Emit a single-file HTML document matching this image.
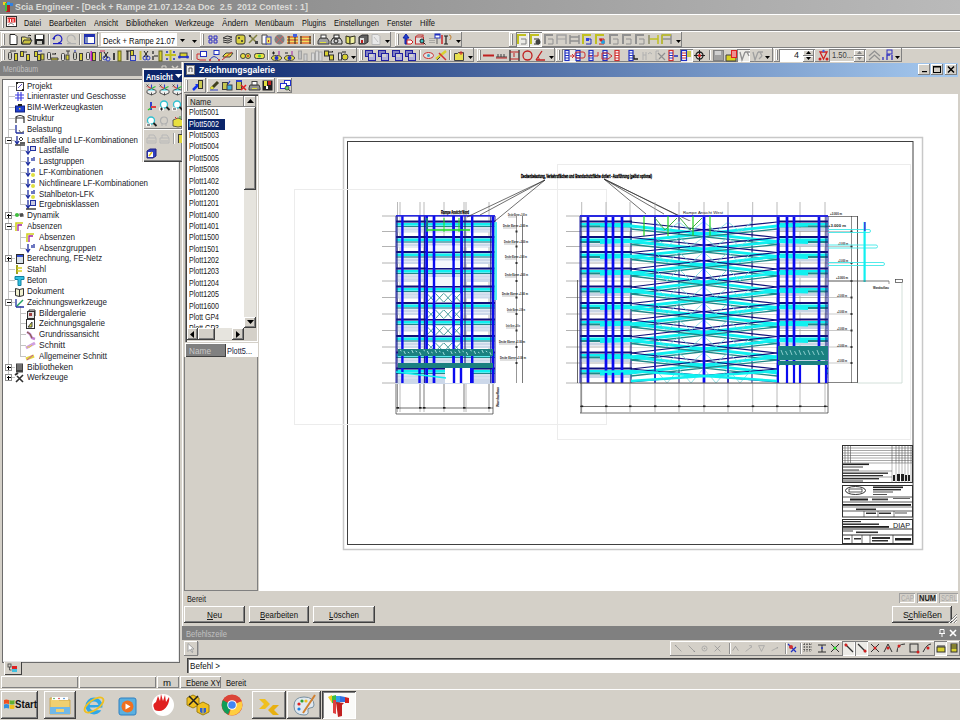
<!DOCTYPE html><html><head><meta charset="utf-8"><style>
html,body{margin:0;padding:0;width:960px;height:720px;overflow:hidden;background:#d4d0c8;position:relative}
div{position:absolute}
.t{font-family:"Liberation Sans",sans-serif;white-space:nowrap;transform-origin:0 0}
svg{position:absolute;overflow:visible}
</style></head><body>
<div style="left:0px;top:0px;width:960px;height:14px;background:linear-gradient(90deg,#7f7f7f,#bababa)"></div>
<svg style="left:2px;top:1px" width="12" height="12" viewBox="0 0 12 12"><path d="M1 3 L5 1 L11 3 L8 5 L6 11 L4 11 L4 5 Z" fill="#e03020"/><rect x="1" y="1" width="3" height="3" fill="#f0d020"/><rect x="3" y="2" width="2" height="8" fill="#40c040"/><rect x="5" y="1" width="3" height="3" fill="#30a0f0"/><rect x="8" y="2" width="3" height="3" fill="#3080e0"/><rect x="5" y="4" width="3" height="7" fill="#b02020"/></svg>
<div class="t" style="left:15px;top:3px;font-size:9px;line-height:9px;color:#dcdcd8;font-weight:bold;transform:scaleX(0.987);">Scia Engineer - [Deck + Rampe 21.07.12-2a Doc  2.5  2012 Contest : 1]</div>
<div style="left:0px;top:14px;width:960px;height:1px;background:#fff"></div>
<svg style="left:6px;top:16px" width="12" height="12" viewBox="0 0 12 12"><rect x="0.5" y="0.5" width="10" height="10" fill="#fff" stroke="#303030"/><rect x="1.5" y="1.5" width="8" height="5" fill="#e02828"/><path d="M2 3v3M4.5 3v3M7 3v3" stroke="#fff"/><path d="M2 9 l3 -2 l3 2" stroke="#909090" fill="none"/></svg>
<div class="t" style="left:24px;top:19px;font-size:9px;line-height:9px;color:#101010;transform:scaleX(0.809);">Datei</div>
<div class="t" style="left:49px;top:19px;font-size:9px;line-height:9px;color:#101010;transform:scaleX(0.850);">Bearbeiten</div>
<div class="t" style="left:94px;top:19px;font-size:9px;line-height:9px;color:#101010;transform:scaleX(0.813);">Ansicht</div>
<div class="t" style="left:126px;top:19px;font-size:9px;line-height:9px;color:#101010;transform:scaleX(0.857);">Bibliotheken</div>
<div class="t" style="left:175px;top:19px;font-size:9px;line-height:9px;color:#101010;transform:scaleX(0.860);">Werkzeuge</div>
<div class="t" style="left:222px;top:19px;font-size:9px;line-height:9px;color:#101010;transform:scaleX(0.896);">Ändern</div>
<div class="t" style="left:255px;top:19px;font-size:9px;line-height:9px;color:#101010;transform:scaleX(0.866);">Menübaum</div>
<div class="t" style="left:302px;top:19px;font-size:9px;line-height:9px;color:#101010;transform:scaleX(0.813);">Plugins</div>
<div class="t" style="left:334px;top:19px;font-size:9px;line-height:9px;color:#101010;transform:scaleX(0.833);">Einstellungen</div>
<div class="t" style="left:387px;top:19px;font-size:9px;line-height:9px;color:#101010;transform:scaleX(0.819);">Fenster</div>
<div class="t" style="left:420px;top:19px;font-size:9px;line-height:9px;color:#101010;transform:scaleX(0.833);">Hilfe</div>
<div style="left:0px;top:30px;width:960px;height:1px;background:#808080"></div>
<div style="left:0px;top:31px;width:960px;height:1px;background:#fff"></div>
<div style="left:0px;top:47px;width:960px;height:1px;background:#808080"></div>
<div style="left:0px;top:48px;width:960px;height:1px;background:#fff"></div>
<div style="left:2px;top:16px;width:1px;height:12px;background:#fff"></div>
<div style="left:3px;top:16px;width:1px;height:12px;background:#808080"></div>
<div style="left:1px;top:32px;width:97px;height:15px;background:#d4d0c8;box-shadow:inset -1px -1px #808080,inset 1px 1px #fff"></div>
<div style="left:3px;top:34px;width:1px;height:11px;background:#fff"></div>
<div style="left:4px;top:34px;width:1px;height:11px;background:#808080"></div>
<svg style="left:8px;top:34px" width="11" height="11" viewBox="0 0 11 11"><path d="M2 0.5h5l2 2v8h-7z" fill="#fff" stroke="#222"/></svg>
<svg style="left:21px;top:34px" width="11" height="11" viewBox="0 0 11 11"><path d="M0.5 3h4l1 1h4v6h-9z" fill="#e8e070" stroke="#333"/><path d="M1 10l2 -4h8l-2 4z" fill="#c8c040" stroke="#333"/><path d="M7 2l2-1 1 1" stroke="#222" fill="none"/></svg>
<svg style="left:34px;top:34px" width="11" height="11" viewBox="0 0 11 11"><rect x="0.5" y="0.5" width="10" height="10" fill="#222"/><rect x="2" y="1" width="7" height="4" fill="#fff"/><rect x="3" y="7" width="5" height="3" fill="#c8c8c0"/></svg>
<div style="left:48px;top:34px;width:1px;height:11px;background:#808080"></div>
<div style="left:49px;top:34px;width:1px;height:11px;background:#fff"></div>
<svg style="left:52px;top:34px" width="11" height="11" viewBox="0 0 11 11"><path d="M2 6a4 4 0 1 1 4 3" stroke="#2020c0" stroke-width="1.2" fill="none"/><path d="M0 5l3 0 0 -3z" fill="#2020c0"/><rect x="1" y="9" width="9" height="1.2" fill="#2020c0"/></svg>
<svg style="left:66px;top:34px" width="11" height="11" viewBox="0 0 11 11"><path d="M9 6a4 4 0 1 0 -4 3" stroke="#b0b0b0" stroke-width="1.2" fill="none"/><rect x="1" y="9" width="9" height="1.2" fill="#b0b0b0"/></svg>
<div style="left:79px;top:34px;width:1px;height:11px;background:#808080"></div>
<div style="left:80px;top:34px;width:1px;height:11px;background:#fff"></div>
<svg style="left:84px;top:34px" width="11" height="11" viewBox="0 0 11 11"><rect x="0.5" y="0.5" width="10" height="9" fill="#fff" stroke="#2030b0"/><rect x="1" y="1" width="9" height="2" fill="#2030b0"/><rect x="1" y="3" width="3" height="6" fill="#8090c0"/></svg>
<div style="left:97px;top:34px;width:1px;height:11px;background:#808080"></div>
<div style="left:98px;top:34px;width:1px;height:11px;background:#fff"></div>
<div style="left:101px;top:33px;width:76px;height:13px;background:#fff"></div>
<div class="t" style="left:103px;top:37px;font-size:9px;line-height:9px;color:#101010;transform:scaleX(0.849);">Deck + Rampe 21.07</div>
<div style="left:177px;top:33px;width:11px;height:13px;background:#d4d0c8"></div>
<svg style="left:180px;top:39px" width="5" height="3" viewBox="0 0 5 3"><path d="M0 0h5l-2.5 3z" fill="#000"/></svg>
<svg style="left:192px;top:40px" width="5" height="3" viewBox="0 0 5 3"><path d="M0 0h5l-2.5 3z" fill="#000"/></svg>
<div style="left:200px;top:32px;width:191px;height:15px;background:#d4d0c8;box-shadow:inset -1px -1px #808080,inset 1px 1px #fff"></div>
<div style="left:202px;top:34px;width:1px;height:11px;background:#fff"></div>
<div style="left:203px;top:34px;width:1px;height:11px;background:#808080"></div>
<svg style="left:208px;top:34px" width="11" height="11" viewBox="0 0 11 11"><path d="M1 2h3v3h-3zM6 2h3v3h-3zM1 6h3v3h-3zM6 6h3v3h-3z" fill="none" stroke="#3030c0"/></svg>
<svg style="left:222px;top:34px" width="11" height="11" viewBox="0 0 11 11"><path d="M1 4l4-2 5 1-4 2zM1 6l5 1 4-2M1 8l5 1 4-2" stroke="#333" fill="none"/></svg>
<svg style="left:235px;top:34px" width="11" height="11" viewBox="0 0 11 11"><rect x="1" y="1" width="9" height="9" rx="2" fill="#d8d040" stroke="#333"/><circle cx="4" cy="4" r="1" fill="#333"/><circle cx="7" cy="7" r="1" fill="#333"/></svg>
<svg style="left:248px;top:34px" width="11" height="11" viewBox="0 0 11 11"><path d="M1 1l8 8M9 1l-8 8" stroke="#808040" stroke-width="1.5"/><rect x="1" y="1" width="2" height="2" fill="#444"/><rect x="7" y="7" width="3" height="3" fill="#444"/></svg>
<svg style="left:261px;top:34px" width="11" height="11" viewBox="0 0 11 11"><path d="M1 1h5v9h-5z" fill="#fff" stroke="#444"/><rect x="5" y="3" width="5" height="7" fill="#f0e060" stroke="#3040c0"/><rect x="7" y="6" width="1" height="2" fill="#c03030"/></svg>
<svg style="left:274px;top:34px" width="11" height="11" viewBox="0 0 11 11"><circle cx="5.5" cy="5.5" r="5" fill="#808080"/><path d="M2 2l7 7M9 2l-7 7" stroke="#d06060"/></svg>
<svg style="left:287px;top:34px" width="11" height="11" viewBox="0 0 11 11"><rect x="0" y="2" width="11" height="8" fill="#f0e060"/><path d="M0 3h11M0 6h11M0 9h11" stroke="#d03030"/><path d="M2 2v8M8 2v8" stroke="#222"/><rect x="6" y="0" width="4" height="3" fill="#4060e0"/></svg>
<svg style="left:300px;top:34px" width="11" height="11" viewBox="0 0 11 11"><rect x="0" y="2" width="11" height="8" fill="#f0e060"/><path d="M0 3h11M0 6h11M0 9h11" stroke="#d03030"/><path d="M1 2v8M10 2v8" stroke="#222"/></svg>
<div style="left:313px;top:34px;width:1px;height:11px;background:#808080"></div>
<div style="left:314px;top:34px;width:1px;height:11px;background:#fff"></div>
<svg style="left:318px;top:34px" width="11" height="11" viewBox="0 0 11 11"><path d="M2 4h7l2 3v3h-11v-3z" fill="#a0a0a0" stroke="#404040"/><rect x="3" y="1" width="5" height="3" fill="#fff" stroke="#404040"/><rect x="2" y="8" width="6" height="1" fill="#e0e040"/></svg>
<svg style="left:331px;top:34px" width="11" height="11" viewBox="0 0 11 11"><path d="M2 4h7l2 3v3h-11v-3z" fill="#d0d0d0" stroke="#202020"/><rect x="3" y="1" width="5" height="3" fill="#fff" stroke="#202020"/><circle cx="5" cy="7" r="2" fill="none" stroke="#202020"/></svg>
<svg style="left:345px;top:34px" width="11" height="11" viewBox="0 0 11 11"><path d="M1 2l4 1v7l-4-1z" fill="#e0e060" stroke="#303020"/><path d="M5 3l5-1v7l-5 1z" fill="#f0f0a0" stroke="#303020"/></svg>
<svg style="left:358px;top:34px" width="11" height="11" viewBox="0 0 11 11"><path d="M1 3l3-2h6v7l-3 2h-6z" fill="#606060" stroke="#303030"/><rect x="2" y="4" width="4" height="5" fill="#e0e0e0"/><rect x="3" y="6" width="2" height="3" fill="#c02020"/></svg>
<svg style="left:371px;top:34px" width="11" height="11" viewBox="0 0 11 11"><path d="M1 0.5h6l2 2v8h-8z" fill="#e8e8e8" stroke="#b8b8b8"/><path d="M3 3l4 5" stroke="#c0c0c0"/></svg>
<svg style="left:385px;top:40px" width="5" height="3" viewBox="0 0 5 3"><path d="M0 0h5l-2.5 3z" fill="#000"/></svg>
<div style="left:395px;top:32px;width:67px;height:15px;background:#d4d0c8;box-shadow:inset -1px -1px #808080,inset 1px 1px #fff"></div>
<div style="left:397px;top:34px;width:1px;height:11px;background:#fff"></div>
<div style="left:398px;top:34px;width:1px;height:11px;background:#808080"></div>
<svg style="left:402px;top:34px" width="11" height="11" viewBox="0 0 11 11"><path d="M3 10v-6h-2l3-4 3 4h-2v6z" fill="#2040d0" stroke="#1020a0"/><path d="M5 6h4l2 2-2 2h-4z" fill="#fff" stroke="#d02020"/></svg>
<svg style="left:415px;top:34px" width="11" height="11" viewBox="0 0 11 11"><rect x="0.5" y="3" width="8" height="7" fill="#e0e0e0" stroke="#c03030"/><path d="M0.5 3l2-2h6l-2 2" fill="none" stroke="#c03030"/><circle cx="7" cy="7" r="2" fill="#40c0c0" stroke="#202020"/><path d="M8.5 8.5l2 2" stroke="#202020"/></svg>
<svg style="left:429px;top:34px" width="11" height="11" viewBox="0 0 11 11"><path d="M1 4v6M3 4v6M5 4v6" stroke="#808080" stroke-dasharray="1 1"/><rect x="6" y="0" width="5" height="4" fill="#fff" stroke="#2030c0"/><rect x="6" y="0" width="5" height="1.5" fill="#2030c0"/><path d="M8 4v6" stroke="#606060"/></svg>
<svg style="left:441px;top:34px" width="11" height="11" viewBox="0 0 11 11"><rect x="0" y="1" width="2" height="9" fill="#d05050"/><path d="M3 2h4M5 2v8M3 10h4" stroke="#202020" stroke-width="1.2"/><path d="M8 1q2 0 2 2t-1 2v1" stroke="#c08030" fill="none"/></svg>
<svg style="left:456px;top:40px" width="5" height="3" viewBox="0 0 5 3"><path d="M0 0h5l-2.5 3z" fill="#000"/></svg>
<div style="left:509px;top:32px;width:173px;height:15px;background:#d4d0c8;box-shadow:inset -1px -1px #808080,inset 1px 1px #fff"></div>
<div style="left:511px;top:34px;width:1px;height:11px;background:#fff"></div>
<div style="left:512px;top:34px;width:1px;height:11px;background:#808080"></div>
<div style="left:516px;top:32px;width:13px;height:15px;background:#ecebe6;box-shadow:inset 1px 1px #808080,inset -1px -1px #fff"></div>
<div style="left:529px;top:32px;width:13px;height:15px;background:#ecebe6;box-shadow:inset 1px 1px #808080,inset -1px -1px #fff"></div>
<svg style="left:517px;top:34px" width="11" height="11" viewBox="0 0 11 11"><path d="M1 10v-9h8" stroke="#c0c020" stroke-width="2" fill="none"/><path d="M4 5h5v5h-5" stroke="#808080" stroke-width="1" fill="none"/></svg>
<svg style="left:530px;top:34px" width="11" height="11" viewBox="0 0 11 11"><path d="M1 10v-9h8" stroke="#c0c020" stroke-width="2" fill="none"/><path d="M4 5h5v5h-5" stroke="#303030" stroke-width="1" fill="none"/><circle cx="8" cy="8" r="2.5" fill="#404040"/></svg>
<svg style="left:544px;top:34px" width="11" height="11" viewBox="0 0 11 11"><path d="M1 10v-9h8" stroke="#909090" stroke-width="2" fill="none"/><path d="M4 5h5v5h-5" stroke="#909090" stroke-width="1" fill="none"/></svg>
<svg style="left:556px;top:34px" width="11" height="11" viewBox="0 0 11 11"><path d="M1 10v-9h9v9" stroke="#a0a0a0" stroke-width="1.5" fill="none"/><path d="M1 5h9" stroke="#a0a0a0"/></svg>
<svg style="left:569px;top:34px" width="11" height="11" viewBox="0 0 11 11"><path d="M1 10v-9M10 10v-9M1 3h9M1 7h9" stroke="#909090" stroke-width="1.5" fill="none"/></svg>
<svg style="left:582px;top:34px" width="11" height="11" viewBox="0 0 11 11"><path d="M1 10v-9h8" stroke="#c0c020" stroke-width="2" fill="none"/><path d="M4 5h5v5h-5" stroke="#2030c0" stroke-width="1" fill="none"/><rect x="4" y="4" width="3" height="3" fill="#3040e0"/></svg>
<svg style="left:595px;top:34px" width="11" height="11" viewBox="0 0 11 11"><path d="M1 10v-9h8" stroke="#c0c020" stroke-width="2" fill="none"/><path d="M4 5h5v5h-5" stroke="#c02020" stroke-width="1" fill="none"/><circle cx="8" cy="8" r="2" fill="#20a0e0"/><circle cx="6" cy="6" r="1.5" fill="#d02020"/></svg>
<svg style="left:609px;top:34px" width="11" height="11" viewBox="0 0 11 11"><path d="M1 10v-9h8" stroke="#909090" stroke-width="2" fill="none"/><path d="M4 5h5v5h-5" stroke="#909090" stroke-width="1" fill="none"/></svg>
<svg style="left:622px;top:34px" width="11" height="11" viewBox="0 0 11 11"><path d="M1 10v-9h8" stroke="#909090" stroke-width="2" fill="none"/><path d="M4 5h5v5h-5" stroke="#909090" stroke-width="1" fill="none"/></svg>
<svg style="left:635px;top:34px" width="11" height="11" viewBox="0 0 11 11"><path d="M1 10v-9h8" stroke="#909090" stroke-width="2" fill="none"/><path d="M4 5h5v5h-5" stroke="#909090" stroke-width="1" fill="none"/></svg>
<svg style="left:648px;top:34px" width="11" height="11" viewBox="0 0 11 11"><path d="M1 10v-9M10 10v-9M1 5h9" stroke="#c0c020" stroke-width="1.5" fill="none"/><path d="M1 1v9" stroke="#909090" stroke-width="1.5"/></svg>
<svg style="left:661px;top:34px" width="11" height="11" viewBox="0 0 11 11"><path d="M1 10v-9h9v9M1 5h9" stroke="#909090" stroke-width="1.5" fill="none"/><path d="M1 1v9M1 1h9" stroke="#c0c020" stroke-width="1.5"/></svg>
<svg style="left:676px;top:40px" width="5" height="3" viewBox="0 0 5 3"><path d="M0 0h5l-2.5 3z" fill="#000"/></svg>
<div style="left:1px;top:48px;width:356px;height:14px;background:#d4d0c8;box-shadow:inset -1px -1px #808080,inset 1px 1px #fff"></div>
<div style="left:3px;top:50px;width:1px;height:10px;background:#fff"></div>
<div style="left:4px;top:50px;width:1px;height:10px;background:#808080"></div>
<svg style="left:7.5px;top:50px" width="11" height="11" viewBox="0 0 11 11"><rect x="0.5" y="2.5" width="3" height="7" rx="1" fill="#c8c8c0" stroke="#404040"/><rect x="6.5" y="3.5" width="3" height="7" fill="#d8d030" stroke="#404040"/><path d="M2 1h6" stroke="#404040"/></svg>
<svg style="left:20px;top:50px" width="11" height="11" viewBox="0 0 11 11"><rect x="0.5" y="1.5" width="3" height="5" fill="#d8d030" stroke="#404040"/><rect x="6.5" y="4.5" width="3" height="6" fill="#d8d030" stroke="#404040"/><path d="M3 2h4" stroke="#404040"/></svg>
<svg style="left:34px;top:50px" width="11" height="11" viewBox="0 0 11 11"><rect x="0.5" y="1.5" width="3" height="5" fill="#d8d030" stroke="#404040"/><rect x="3.5" y="4.5" width="3" height="6" fill="#d8d030" stroke="#404040"/><rect x="7" y="4" width="3" height="6" fill="#d8d030" stroke="#404040"/><path d="M4 1h4" stroke="#2030c0"/></svg>
<svg style="left:47px;top:50px" width="11" height="11" viewBox="0 0 11 11"><rect x="0.5" y="2.5" width="3" height="7" rx="1" fill="#e0e0e0" stroke="#404040"/><path d="M4 8h7v2h-7z" fill="#d8d030" stroke="#404040"/><path d="M5 4h4l-1-1" stroke="#202020" fill="none"/></svg>
<svg style="left:60.5px;top:50px" width="11" height="11" viewBox="0 0 11 11"><rect x="0.5" y="3.5" width="3" height="7" rx="1" fill="#e0e0e0" stroke="#404040"/><rect x="5" y="5" width="3" height="5" fill="#d8d030" stroke="#404040"/><path d="M5 1h4M7 1v3" stroke="#404040"/></svg>
<svg style="left:73px;top:50px" width="11" height="11" viewBox="0 0 11 11"><rect x="0.5" y="2.5" width="3" height="7" rx="1" fill="#c8c8c0" stroke="#404040"/><rect x="6.5" y="3.5" width="3" height="7" fill="#d8d030" stroke="#404040"/><path d="M1 1h2" stroke="#2030c0"/></svg>
<svg style="left:86px;top:50px" width="11" height="11" viewBox="0 0 11 11"><rect x="0.5" y="2.5" width="3" height="7" rx="1" fill="#e0e0e0" stroke="#404040"/><rect x="6.5" y="2.5" width="3" height="8" fill="#d8d030" stroke="#404040"/><rect x="4.5" y="1" width="1.5" height="10" fill="#c020c0"/></svg>
<svg style="left:99px;top:50px" width="11" height="11" viewBox="0 0 11 11"><rect x="0.5" y="2.5" width="2" height="8" fill="#d8d030" stroke="#606060"/><path d="M1 1h5" stroke="#d03060"/><circle cx="6" cy="8" r="2" fill="none" stroke="#3040c0"/><circle cx="9" cy="9" r="2" fill="none" stroke="#3040c0"/><path d="M5 2l4 6M9 2l-4 6" stroke="#202020"/></svg>
<svg style="left:112px;top:50px" width="11" height="11" viewBox="0 0 11 11"><rect x="1" y="3" width="2" height="7" fill="#404040"/><rect x="6" y="1" width="3" height="10" fill="#d8d030" stroke="#606020"/></svg>
<svg style="left:126px;top:50px" width="11" height="11" viewBox="0 0 11 11"><rect x="0.5" y="1" width="2" height="9" fill="#404040"/><path d="M0 1h4" stroke="#202020"/><rect x="4.5" y="5.5" width="5" height="5" fill="none" stroke="#3040c0"/><rect x="4.5" y="0.5" width="3" height="5" fill="#d8d030" stroke="#404040"/></svg>
<svg style="left:139px;top:50px" width="11" height="11" viewBox="0 0 11 11"><rect x="0.5" y="1" width="2" height="9" fill="#c8c030"/><circle cx="6" cy="8" r="2" fill="none" stroke="#3040c0"/><circle cx="9" cy="8" r="2" fill="none" stroke="#3040c0"/><path d="M5 1l4 6M9 1l-4 6" stroke="#202020"/></svg>
<svg style="left:152px;top:50px" width="11" height="11" viewBox="0 0 11 11"><path d="M1 1v3M1 6v4" stroke="#404040" stroke-width="1.5"/><path d="M2 6h4" stroke="#202020"/><rect x="7" y="1" width="3" height="10" fill="#d8d030" stroke="#606020"/></svg>
<svg style="left:165px;top:50px" width="11" height="11" viewBox="0 0 11 11"><path d="M0 5h11M5.5 0v11" stroke="#c0c020" stroke-width="2"/><circle cx="2" cy="2" r="1" fill="#2030c0"/><circle cx="9" cy="2" r="1" fill="#2030c0"/><circle cx="2" cy="9" r="1" fill="#2030c0"/><circle cx="9" cy="9" r="1" fill="#2030c0"/></svg>
<svg style="left:178px;top:50px" width="11" height="11" viewBox="0 0 11 11"><rect x="2" y="3" width="7" height="4" fill="#d8d030" stroke="#404040"/><circle cx="1.5" cy="7" r="1.5" fill="#2030d0"/><circle cx="9.5" cy="7" r="1.5" fill="#2030d0"/><path d="M1 7h9" stroke="#2030d0" stroke-width="1.5"/></svg>
<div style="left:191px;top:50px;width:1px;height:10px;background:#808080"></div>
<div style="left:192px;top:50px;width:1px;height:10px;background:#fff"></div>
<svg style="left:196px;top:50px" width="11" height="11" viewBox="0 0 11 11"><rect x="4.5" y="1.5" width="6" height="5" fill="#fff" stroke="#2030c0"/><path d="M1 4h3M1 4v5l3 1h6" stroke="#d03030" fill="none"/></svg>
<svg style="left:209px;top:50px" width="11" height="11" viewBox="0 0 11 11"><rect x="5" y="0.5" width="5" height="4" fill="#fff" stroke="#2030c0"/><path d="M0.5 10.5q4-8 10 0" stroke="#3040c0" fill="none"/><circle cx="1" cy="10" r="1" fill="#d03030"/><circle cx="10" cy="10" r="1" fill="#d03030"/></svg>
<svg style="left:222px;top:50px" width="11" height="11" viewBox="0 0 11 11"><path d="M1 6l3-3h7l-3 4h-7z" fill="#e8e040" stroke="#404040"/><path d="M0 10l10-8" stroke="#d03030"/></svg>
<div style="left:236px;top:50px;width:1px;height:10px;background:#808080"></div>
<div style="left:237px;top:50px;width:1px;height:10px;background:#fff"></div>
<svg style="left:240px;top:50px" width="11" height="11" viewBox="0 0 11 11"><circle cx="3" cy="6" r="2.5" fill="#e8e040" stroke="#404040"/><circle cx="8" cy="6" r="2.5" fill="#e8e040" stroke="#404040"/><circle cx="8" cy="6" r="1" fill="#d03030"/></svg>
<svg style="left:254px;top:50px" width="11" height="11" viewBox="0 0 11 11"><rect x="0.5" y="3.5" width="10" height="5" rx="2" fill="#e8e040" stroke="#404040"/><circle cx="5.5" cy="6" r="1.5" fill="#40d040"/></svg>
<div style="left:267px;top:50px;width:1px;height:10px;background:#808080"></div>
<div style="left:268px;top:50px;width:1px;height:10px;background:#fff"></div>
<svg style="left:271px;top:50px" width="11" height="11" viewBox="0 0 11 11"><ellipse cx="5.5" cy="8" rx="5" ry="2.5" fill="#e8e040" stroke="#404040"/><circle cx="5.5" cy="8" r="2" fill="#2030d0"/><path d="M1 3h3M2.5 1.5v3" stroke="#202020"/><path d="M8 1v4" stroke="#a020a0"/></svg>
<svg style="left:284px;top:50px" width="11" height="11" viewBox="0 0 11 11"><ellipse cx="5.5" cy="8" rx="5" ry="2.5" fill="#e8e040" stroke="#404040"/><circle cx="5.5" cy="8" r="2" fill="#2030d0"/><path d="M1 3h3" stroke="#202020"/><path d="M8 1v4" stroke="#a020a0"/></svg>
<svg style="left:297.5px;top:50px" width="11" height="11" viewBox="0 0 11 11"><rect x="0.5" y="1" width="3" height="8" fill="#c0c0c0" stroke="#a0a0a0"/><rect x="6" y="4" width="3" height="7" fill="#d0d0d0" stroke="#a0a0a0"/></svg>
<svg style="left:311px;top:50px" width="11" height="11" viewBox="0 0 11 11"><rect x="0.5" y="3" width="3" height="8" fill="#d8d8d8" stroke="#a8a8a8"/><rect x="4.5" y="1" width="3" height="10" fill="#d8d8d8" stroke="#a8a8a8"/><rect x="8" y="2" width="3" height="9" fill="#d8d8d8" stroke="#a8a8a8"/></svg>
<svg style="left:324px;top:50px" width="11" height="11" viewBox="0 0 11 11"><rect x="0.5" y="1" width="4" height="5" fill="#d8d030" stroke="#303030"/><rect x="5.5" y="5" width="4" height="5" fill="#d8d030" stroke="#303030"/><path d="M5 2h4l-1-1" stroke="#202020" fill="none"/></svg>
<svg style="left:337.5px;top:50px" width="11" height="11" viewBox="0 0 11 11"><rect x="0.5" y="3" width="3" height="7" fill="#e0e0e0" stroke="#404040"/><circle cx="7" cy="7" r="3" fill="#d8d030" stroke="#404040"/><path d="M4 2h4" stroke="#202020"/></svg>
<svg style="left:351px;top:56px" width="5" height="3" viewBox="0 0 5 3"><path d="M0 0h5l-2.5 3z" fill="#000"/></svg>
<div style="left:359px;top:48px;width:115px;height:14px;background:#d4d0c8;box-shadow:inset -1px -1px #808080,inset 1px 1px #fff"></div>
<div style="left:361px;top:50px;width:1px;height:10px;background:#fff"></div>
<div style="left:362px;top:50px;width:1px;height:10px;background:#808080"></div>
<svg style="left:365px;top:50px" width="11" height="11" viewBox="0 0 11 11"><rect x="0.5" y="0.5" width="7" height="6" fill="#8080c0" stroke="#2020a0"/><rect x="3.5" y="3.5" width="7" height="7" fill="#b0b0d8" stroke="#2020a0"/><rect x="4" y="4" width="4" height="3" fill="#d0d0d0"/></svg>
<svg style="left:378px;top:50px" width="11" height="11" viewBox="0 0 11 11"><rect x="0.5" y="0.5" width="7" height="6" fill="#8080c0" stroke="#2020a0"/><rect x="3.5" y="3.5" width="7" height="7" fill="#b0b0d8" stroke="#2020a0"/><rect x="4" y="4" width="4" height="3" fill="#d0d0d0"/></svg>
<svg style="left:392px;top:50px" width="11" height="11" viewBox="0 0 11 11"><rect x="0.5" y="0.5" width="7" height="6" fill="#8080c0" stroke="#2020a0"/><rect x="3.5" y="3.5" width="7" height="7" fill="#b0b0d8" stroke="#2020a0"/><rect x="4" y="4" width="4" height="3" fill="#d0d0d0"/></svg>
<svg style="left:405px;top:50px" width="11" height="11" viewBox="0 0 11 11"><rect x="0.5" y="0.5" width="7" height="6" fill="#8080c0" stroke="#2020a0"/><rect x="3.5" y="3.5" width="7" height="7" fill="#b0b0d8" stroke="#2020a0"/><rect x="4" y="4" width="4" height="3" fill="#d0d0d0"/></svg>
<div style="left:419px;top:50px;width:1px;height:10px;background:#808080"></div>
<div style="left:420px;top:50px;width:1px;height:10px;background:#fff"></div>
<svg style="left:423px;top:50px" width="11" height="11" viewBox="0 0 11 11"><ellipse cx="5.5" cy="5.5" rx="5" ry="3" fill="#e0e0e0" stroke="#d03030"/><circle cx="5.5" cy="5.5" r="1.5" fill="#40a0c0"/></svg>
<svg style="left:436px;top:50px" width="11" height="11" viewBox="0 0 11 11"><path d="M0 9l10-8" stroke="#d8d030" stroke-width="2.5"/><path d="M3 3l7 7" stroke="#d03030" stroke-width="1.5"/><path d="M1 10l3-3" stroke="#404040"/></svg>
<div style="left:449px;top:50px;width:1px;height:10px;background:#808080"></div>
<div style="left:450px;top:50px;width:1px;height:10px;background:#fff"></div>
<svg style="left:454px;top:50px" width="11" height="11" viewBox="0 0 11 11"><path d="M0.5 3.5h3l1-1h5v8h-9z" fill="#e8e050" stroke="#404040"/><path d="M7 1v4M5 3h4" stroke="#d03030"/></svg>
<svg style="left:468px;top:56px" width="5" height="3" viewBox="0 0 5 3"><path d="M0 0h5l-2.5 3z" fill="#000"/></svg>
<div style="left:477px;top:48px;width:78px;height:14px;background:#d4d0c8;box-shadow:inset -1px -1px #808080,inset 1px 1px #fff"></div>
<div style="left:479px;top:50px;width:1px;height:10px;background:#fff"></div>
<div style="left:480px;top:50px;width:1px;height:10px;background:#808080"></div>
<svg style="left:482.5px;top:50px" width="11" height="11" viewBox="0 0 11 11"><rect x="0" y="4.5" width="11" height="2" fill="#c02020"/></svg>
<svg style="left:495.5px;top:50px" width="11" height="11" viewBox="0 0 11 11"><path d="M0 7h11M2 4v3M5 4v3M8 4v3" stroke="#404040"/><path d="M0 8h11" stroke="#c02020"/></svg>
<svg style="left:509px;top:50px" width="11" height="11" viewBox="0 0 11 11"><path d="M1 0v11M10 0v11" stroke="#404040" stroke-width="1.5"/><path d="M1 2h9M1 9h9" stroke="#c02020" stroke-width="1.2"/><path d="M5 3v4" stroke="#c02020"/></svg>
<svg style="left:522px;top:50px" width="11" height="11" viewBox="0 0 11 11"><circle cx="5.5" cy="5.5" r="4.5" fill="none" stroke="#c02020" stroke-width="1.3"/></svg>
<svg style="left:535px;top:50px" width="11" height="11" viewBox="0 0 11 11"><path d="M1 10h9M1 10l6-9" stroke="#c02020" stroke-width="1.3"/><path d="M4 10a3 3 0 0 0 -1-3" stroke="#c02020" fill="none"/></svg>
<svg style="left:548.5px;top:56px" width="5" height="3" viewBox="0 0 5 3"><path d="M0 0h5l-2.5 3z" fill="#000"/></svg>
<div style="left:556px;top:48px;width:217px;height:14px;background:#d4d0c8;box-shadow:inset -1px -1px #808080,inset 1px 1px #fff"></div>
<div style="left:558px;top:50px;width:1px;height:10px;background:#fff"></div>
<div style="left:559px;top:50px;width:1px;height:10px;background:#808080"></div>
<div style="left:562px;top:49px;width:14px;height:13px;background:#ecebe6;box-shadow:inset 1px 1px #808080,inset -1px -1px #fff"></div>
<svg style="left:564px;top:50px" width="11" height="11" viewBox="0 0 11 11"><rect x="1" y="0.5" width="4" height="10" fill="#fff" stroke="#2030c0" stroke-width="1.2"/><path d="M1 3h4M1 5.5h4M1 8h4" stroke="#2030c0"/><path d="M6 6h4l-2-2M10 6l-2 2" stroke="#d03030" fill="none"/></svg>
<svg style="left:575px;top:50px" width="11" height="11" viewBox="0 0 11 11"><rect x="1" y="0.5" width="4" height="10" fill="#fff" stroke="#2030c0" stroke-width="1.2"/><path d="M1 3h4M1 5.5h4M1 8h4" stroke="#2030c0"/><rect x="0" y="2" width="10" height="6" rx="2" fill="none" stroke="#d03030"/></svg>
<svg style="left:588px;top:50px" width="11" height="11" viewBox="0 0 11 11"><rect x="1" y="0.5" width="4" height="10" fill="#fff" stroke="#2030c0" stroke-width="1.2"/><path d="M1 3h4M1 5.5h4M1 8h4" stroke="#2030c0"/><path d="M0 6h4M6 6h4v-4" stroke="#d03030" fill="none"/></svg>
<svg style="left:602px;top:50px" width="11" height="11" viewBox="0 0 11 11"><rect x="1" y="0.5" width="4" height="10" fill="#fff" stroke="#2030c0" stroke-width="1.2"/><path d="M1 3h4M1 5.5h4M1 8h4" stroke="#2030c0"/><path d="M0 3h6l4 3-4 3h-6z" fill="none" stroke="#d03030"/></svg>
<svg style="left:614px;top:50px" width="11" height="11" viewBox="0 0 11 11"><rect x="1" y="0.5" width="4" height="10" fill="#fff" stroke="#d03030" stroke-width="1.2"/><path d="M1 3h4M1 5.5h4M1 8h4" stroke="#d03030"/></svg>
<svg style="left:628px;top:50px" width="11" height="11" viewBox="0 0 11 11"><rect x="1" y="0.5" width="4" height="10" fill="#fff" stroke="#2030c0" stroke-width="1.2"/><path d="M1 3h4M1 5.5h4M1 8h4" stroke="#2030c0"/><path d="M6 5v4h4" stroke="#202020" stroke-width="1.3" fill="none"/></svg>
<svg style="left:642px;top:50px" width="11" height="11" viewBox="0 0 11 11"><path d="M1 10v-8M4 10v-8M1 5h3" stroke="#b0b0b0"/><path d="M6 4q2-3 4 0" stroke="#b0b0b0" fill="none"/></svg>
<svg style="left:655px;top:50px" width="11" height="11" viewBox="0 0 11 11"><path d="M1 10v-9M1 1h3M1 10h3" stroke="#b0b0b0"/><path d="M3 3l7 7M4 9l6-6" stroke="#909090" stroke-width="1.2"/></svg>
<svg style="left:668px;top:50px" width="11" height="11" viewBox="0 0 11 11"><rect x="1" y="0.5" width="4" height="10" fill="#fff" stroke="#d03030" stroke-width="1.2"/><path d="M1 3h4M1 5.5h4M1 8h4" stroke="#2030c0"/><path d="M6 6h4" stroke="#2030c0" stroke-width="1.5"/></svg>
<div style="left:680px;top:49px;width:13px;height:13px;background:#ecebe6;box-shadow:inset 1px 1px #808080,inset -1px -1px #fff"></div>
<svg style="left:681px;top:50px" width="11" height="11" viewBox="0 0 11 11"><rect x="0.5" y="0.5" width="5" height="10" fill="#fff" stroke="#2030c0" stroke-width="1.2"/><path d="M1 3h4M1 5.5h4M1 8h4" stroke="#d03030"/><rect x="6" y="1" width="4" height="6" fill="#c8c850"/></svg>
<svg style="left:694px;top:50px" width="11" height="11" viewBox="0 0 11 11"><circle cx="5.5" cy="5.5" r="3.5" fill="none" stroke="#202020" stroke-width="1.3"/><path d="M5.5 0v11M0 5.5h11" stroke="#202020"/><circle cx="5.5" cy="5.5" r="1.5" fill="#e02020"/></svg>
<div style="left:709px;top:50px;width:1px;height:10px;background:#808080"></div>
<div style="left:710px;top:50px;width:1px;height:10px;background:#fff"></div>
<svg style="left:713px;top:50px" width="11" height="11" viewBox="0 0 11 11"><rect x="0.5" y="0.5" width="10" height="10" fill="#a0a0a0" stroke="#808080"/><rect x="2" y="1" width="6" height="4" fill="#d0d0d0"/></svg>
<svg style="left:726px;top:50px" width="11" height="11" viewBox="0 0 11 11"><path d="M0 5h5l5 -3v9h-10z" fill="#d8d020" stroke="#404040"/><rect x="5" y="0" width="6" height="8" fill="#e02020"/><path d="M6 2h4M6 4h4M6 6h4" stroke="#fff"/></svg>
<div style="left:737px;top:49px;width:13px;height:13px;background:#ecebe6;box-shadow:inset 1px 1px #808080,inset -1px -1px #fff"></div>
<svg style="left:739px;top:50px" width="11" height="11" viewBox="0 0 11 11"><path d="M1 2l2 8 3-8M6 2h5M8 2l2 4" stroke="#909090" stroke-width="1.3" fill="none"/></svg>
<svg style="left:752px;top:50px" width="11" height="11" viewBox="0 0 11 11"><path d="M1 2l2 8 3-8M6 2h5M8 2l2 4M7 9l3-3" stroke="#a0a0a0" stroke-width="1.3" fill="none"/></svg>
<svg style="left:765px;top:56px" width="5" height="3" viewBox="0 0 5 3"><path d="M0 0h5l-2.5 3z" fill="#000"/></svg>
<div style="left:774px;top:48px;width:128px;height:14px;background:#d4d0c8;box-shadow:inset -1px -1px #808080,inset 1px 1px #fff"></div>
<div style="left:776px;top:50px;width:1px;height:10px;background:#fff"></div>
<div style="left:777px;top:50px;width:1px;height:10px;background:#808080"></div>
<div style="left:779px;top:49px;width:36px;height:13px;background:#fff;box-shadow:inset 1px 1px #808080,inset -1px -1px #fff"></div>
<div class="t" style="left:794px;top:51px;font-size:9px;line-height:9px;color:#202020;transform:scaleX(0.999);">4</div>
<div style="left:803px;top:50px;width:11px;height:6px;background:#d4d0c8;box-shadow:inset -1px -1px #808080,inset 1px 1px #fff"></div>
<div style="left:803px;top:56px;width:11px;height:6px;background:#d4d0c8;box-shadow:inset -1px -1px #808080,inset 1px 1px #fff"></div>
<svg style="left:806px;top:51px" width="5" height="3" viewBox="0 0 5 3"><path d="M0 3h5l-2.5-3z" fill="#000"/></svg>
<svg style="left:806px;top:57px" width="5" height="3" viewBox="0 0 5 3"><path d="M0 0h5l-2.5 3z" fill="#000"/></svg>
<svg style="left:818px;top:50px" width="11" height="11" viewBox="0 0 11 11"><path d="M2 2h7l-3.5 7z" fill="none" stroke="#d02020" stroke-width="1.3"/><circle cx="2" cy="9" r="1.5" fill="#d02020"/><circle cx="9" cy="9" r="1.5" fill="#d02020"/><circle cx="5.5" cy="1" r="1.2" fill="#4060e0"/></svg>
<div style="left:829px;top:49px;width:37px;height:13px;background:#d4d0c8;box-shadow:inset 1px 1px #808080,inset -1px -1px #fff"></div>
<div class="t" style="left:832px;top:51px;font-size:9px;line-height:9px;color:#404040;transform:scaleX(0.839);">1.50...</div>
<div style="left:854px;top:50px;width:11px;height:6px;background:#d4d0c8;box-shadow:inset -1px -1px #808080,inset 1px 1px #fff"></div>
<div style="left:854px;top:56px;width:11px;height:6px;background:#d4d0c8;box-shadow:inset -1px -1px #808080,inset 1px 1px #fff"></div>
<svg style="left:857px;top:51px" width="5" height="3" viewBox="0 0 5 3"><path d="M0 3h5l-2.5-3z" fill="#808080"/></svg>
<svg style="left:857px;top:57px" width="5" height="3" viewBox="0 0 5 3"><path d="M0 0h5l-2.5 3z" fill="#808080"/></svg>
<svg style="left:869px;top:50px" width="11" height="11" viewBox="0 0 11 11"><path d="M0 6l5.5-5 5.5 5M0 10l5.5-5 5.5 5" stroke="#909090" fill="none" stroke-width="1.2"/></svg>
<svg style="left:882px;top:50px" width="11" height="11" viewBox="0 0 11 11"><rect x="5" y="0" width="5" height="4" fill="none" stroke="#3030c0"/><path d="M1 10v-3M5 10v-5h3M10 10v-5" stroke="#3030c0" stroke-width="1.3" fill="none"/></svg>
<svg style="left:895px;top:56px" width="5" height="3" viewBox="0 0 5 3"><path d="M0 0h5l-2.5 3z" fill="#000"/></svg>
<div style="left:0px;top:62px;width:181px;height:14px;background:#808080"></div>
<div class="t" style="left:3px;top:65px;font-size:9px;line-height:9px;color:#c0c0c0;transform:scaleX(0.777);">Menübaum</div>
<svg style="left:160px;top:65px" width="8" height="8" viewBox="0 0 8 8"><path d="M2 1h4v4h-4zM1 5h6M4 5v3" stroke="#d4d0c8" fill="none"/></svg>
<svg style="left:171px;top:65px" width="8" height="8" viewBox="0 0 8 8"><path d="M1 1l6 6M7 1l-6 6" stroke="#d4d0c8" stroke-width="1.5"/></svg>
<div style="left:2px;top:79px;width:178px;height:584px;background:#fff;border:1px solid #6c6c6c;box-sizing:border-box;box-shadow:inset -1px -1px #e8e8e8"></div>
<div style="left:8px;top:86px;width:1px;height:291px;background:#c4c4c4"></div>
<div style="left:20px;top:144px;width:1px;height:61px;background:#c4c4c4"></div>
<div style="left:20px;top:230px;width:1px;height:18px;background:#c4c4c4"></div>
<div style="left:20px;top:306px;width:1px;height:50px;background:#c4c4c4"></div>
<div style="left:9px;top:86px;width:6px;height:1px;background:#c4c4c4"></div>
<svg style="left:15px;top:81.5px" width="10" height="10" viewBox="0 0 10 10"><rect x="1.5" y="0.5" width="7" height="8" fill="#fff" stroke="#404040"/><path d="M3 6l4-4" stroke="#6050c0"/><rect x="1" y="0" width="2" height="2" fill="#202020"/><rect x="7" y="7" width="2" height="2" fill="#202020"/></svg>
<div class="t" style="left:27px;top:82px;font-size:9px;line-height:9px;color:#1a1a28;transform:scaleX(0.892);">Projekt</div>
<div style="left:9px;top:96px;width:6px;height:1px;background:#c4c4c4"></div>
<svg style="left:15px;top:91.5px" width="10" height="10" viewBox="0 0 10 10"><path d="M3 0v9M6 0v9M0 3h9M0 6h9" stroke="#4040e0" stroke-width="1.2"/></svg>
<div class="t" style="left:27px;top:92px;font-size:9px;line-height:9px;color:#1a1a28;transform:scaleX(0.883);">Linienraster und Geschosse</div>
<div style="left:9px;top:107px;width:6px;height:1px;background:#c4c4c4"></div>
<svg style="left:15px;top:102.5px" width="10" height="10" viewBox="0 0 10 10"><rect x="0.5" y="3" width="9" height="6" fill="#2040d0" stroke="#102080"/><rect x="3" y="1" width="4" height="2" fill="#202020"/><rect x="4" y="5" width="1.5" height="1.5" fill="#f0e040"/></svg>
<div class="t" style="left:27px;top:103px;font-size:9px;line-height:9px;color:#1a1a28;transform:scaleX(0.885);">BIM-Werkzeugkasten</div>
<div style="left:9px;top:118px;width:6px;height:1px;background:#c4c4c4"></div>
<svg style="left:15px;top:113.5px" width="10" height="10" viewBox="0 0 10 10"><path d="M1 9v-6q4-3 8 0v6" stroke="#303030" fill="none" stroke-width="1.2"/><path d="M1 4h8" stroke="#303030"/></svg>
<div class="t" style="left:27px;top:114px;font-size:9px;line-height:9px;color:#1a1a28;transform:scaleX(0.857);">Struktur</div>
<div style="left:9px;top:129px;width:6px;height:1px;background:#c4c4c4"></div>
<svg style="left:15px;top:124.5px" width="10" height="10" viewBox="0 0 10 10"><path d="M1 0v8M1 8h8" stroke="#2030a0" stroke-width="1.3"/><path d="M4 5l2 3 3-2" stroke="#606060" fill="none"/></svg>
<div class="t" style="left:27px;top:125px;font-size:9px;line-height:9px;color:#1a1a28;transform:scaleX(0.874);">Belastung</div>
<div style="left:9px;top:140px;width:6px;height:1px;background:#c4c4c4"></div>
<div style="left:5px;top:137px;width:7px;height:7px;background:#fff;border:1px solid #909090;box-sizing:border-box"></div>
<div style="left:6.5px;top:140px;width:4px;height:1px;background:#000"></div>
<svg style="left:15px;top:135.5px" width="10" height="10" viewBox="0 0 10 10"><path d="M2 0v7M0 5l2 3 2-3" stroke="#2030a0" stroke-width="1.3" fill="none"/><path d="M0 9h10" stroke="#404040" stroke-width="1.5"/><path d="M6 1l2 2-2 2-2-2z" fill="#fff" stroke="#404040"/><path d="M5 6h5v2h-5z" fill="#606060"/></svg>
<div class="t" style="left:27px;top:136px;font-size:9px;line-height:9px;color:#1a1a28;transform:scaleX(0.873);">Lastfälle und LF-Kombinationen</div>
<div style="left:20px;top:150px;width:6px;height:1px;background:#c4c4c4"></div>
<svg style="left:26px;top:145.5px" width="10" height="10" viewBox="0 0 10 10"><path d="M2 0v7M0 5l2 3 2-3" stroke="#2030a0" stroke-width="1.3" fill="none"/><rect x="4.5" y="0.5" width="5" height="4" fill="#d8d8e8" stroke="#2030a0"/></svg>
<div class="t" style="left:38.5px;top:146px;font-size:9px;line-height:9px;color:#1a1a28;transform:scaleX(0.895);">Lastfälle</div>
<div style="left:20px;top:161px;width:6px;height:1px;background:#c4c4c4"></div>
<svg style="left:26px;top:156.5px" width="10" height="10" viewBox="0 0 10 10"><path d="M2 0v7M0 5l2 3 2-3" stroke="#2030a0" stroke-width="1.3" fill="none"/><path d="M6 1v3M8 0v4" stroke="#2030a0" stroke-width="1.3"/></svg>
<div class="t" style="left:38.5px;top:157px;font-size:9px;line-height:9px;color:#1a1a28;transform:scaleX(0.899);">Lastgruppen</div>
<div style="left:20px;top:172px;width:6px;height:1px;background:#c4c4c4"></div>
<svg style="left:26px;top:167.5px" width="10" height="10" viewBox="0 0 10 10"><path d="M2 0v7M0 5l2 3 2-3" stroke="#2030a0" stroke-width="1.3" fill="none"/><path d="M6 1v3M8 0v4" stroke="#2030a0" stroke-width="1.3"/><circle cx="7" cy="7" r="2" fill="#e0e040"/></svg>
<div class="t" style="left:38.5px;top:168px;font-size:9px;line-height:9px;color:#1a1a28;transform:scaleX(0.870);">LF-Kombinationen</div>
<div style="left:20px;top:183px;width:6px;height:1px;background:#c4c4c4"></div>
<svg style="left:26px;top:178.5px" width="10" height="10" viewBox="0 0 10 10"><path d="M2 0v7M0 5l2 3 2-3" stroke="#2030a0" stroke-width="1.3" fill="none"/><path d="M6 1v3M8 0v4" stroke="#2030a0" stroke-width="1.3"/><circle cx="7" cy="7" r="2" fill="#e0e040"/></svg>
<div class="t" style="left:38.5px;top:179px;font-size:9px;line-height:9px;color:#1a1a28;transform:scaleX(0.882);">Nichtlineare LF-Kombinationen</div>
<div style="left:20px;top:194px;width:6px;height:1px;background:#c4c4c4"></div>
<svg style="left:26px;top:189.5px" width="10" height="10" viewBox="0 0 10 10"><path d="M2 0v7M0 5l2 3 2-3" stroke="#2030a0" stroke-width="1.3" fill="none"/><path d="M6 1v3M8 0v4" stroke="#2030a0" stroke-width="1.3"/><circle cx="7" cy="7" r="2" fill="#e0e040"/></svg>
<div class="t" style="left:38.5px;top:190px;font-size:9px;line-height:9px;color:#1a1a28;transform:scaleX(0.879);">Stahlbeton-LFK</div>
<div style="left:20px;top:204px;width:6px;height:1px;background:#c4c4c4"></div>
<svg style="left:26px;top:199.5px" width="10" height="10" viewBox="0 0 10 10"><path d="M2 0v7M0 5l2 3 2-3" stroke="#2030a0" stroke-width="1.3" fill="none"/><rect x="4.5" y="0.5" width="5" height="5" fill="#c8c8e0" stroke="#2030a0"/><path d="M0 9h10" stroke="#202020" stroke-width="1.3"/></svg>
<div class="t" style="left:38.5px;top:200px;font-size:9px;line-height:9px;color:#1a1a28;transform:scaleX(0.909);">Ergebnisklassen</div>
<div style="left:9px;top:215px;width:6px;height:1px;background:#c4c4c4"></div>
<div style="left:5px;top:212px;width:7px;height:7px;background:#fff;border:1px solid #909090;box-sizing:border-box"></div>
<div style="left:6.5px;top:215px;width:4px;height:1px;background:#000"></div>
<div style="left:8px;top:213.5px;width:1px;height:4px;background:#000"></div>
<svg style="left:15px;top:210.5px" width="10" height="10" viewBox="0 0 10 10"><path d="M0 4h9" stroke="#606060"/><circle cx="2" cy="4" r="2" fill="#40c040"/><path d="M5 2l1 4 1-4 1 4" stroke="#404040" fill="none"/></svg>
<div class="t" style="left:27px;top:211px;font-size:9px;line-height:9px;color:#1a1a28;transform:scaleX(0.914);">Dynamik</div>
<div style="left:9px;top:226px;width:6px;height:1px;background:#c4c4c4"></div>
<div style="left:5px;top:223px;width:7px;height:7px;background:#fff;border:1px solid #909090;box-sizing:border-box"></div>
<div style="left:6.5px;top:226px;width:4px;height:1px;background:#000"></div>
<svg style="left:15px;top:221.5px" width="10" height="10" viewBox="0 0 10 10"><path d="M1 9v-8h7" stroke="#d0d020" stroke-width="1.6" fill="none"/><path d="M3 9v-6h4" stroke="#a020a0" stroke-width="1.3" fill="none"/></svg>
<div class="t" style="left:27px;top:222px;font-size:9px;line-height:9px;color:#1a1a28;transform:scaleX(0.874);">Absenzen</div>
<div style="left:20px;top:237px;width:6px;height:1px;background:#c4c4c4"></div>
<svg style="left:26px;top:232.5px" width="10" height="10" viewBox="0 0 10 10"><path d="M1 9v-8h7" stroke="#d0d020" stroke-width="1.6" fill="none"/><path d="M3 9v-6h4" stroke="#a020a0" stroke-width="1.3" fill="none"/></svg>
<div class="t" style="left:38.5px;top:233px;font-size:9px;line-height:9px;color:#1a1a28;transform:scaleX(0.899);">Absenzen</div>
<div style="left:20px;top:248px;width:6px;height:1px;background:#c4c4c4"></div>
<svg style="left:26px;top:243.5px" width="10" height="10" viewBox="0 0 10 10"><path d="M2 0v7M0 5l2 3 2-3" stroke="#2030a0" stroke-width="1.3" fill="none"/><path d="M6 1v3M8 0v4" stroke="#2030a0" stroke-width="1.3"/></svg>
<div class="t" style="left:38.5px;top:244px;font-size:9px;line-height:9px;color:#1a1a28;transform:scaleX(0.904);">Absenzgruppen</div>
<div style="left:9px;top:258px;width:6px;height:1px;background:#c4c4c4"></div>
<div style="left:5px;top:255px;width:7px;height:7px;background:#fff;border:1px solid #909090;box-sizing:border-box"></div>
<div style="left:6.5px;top:258px;width:4px;height:1px;background:#000"></div>
<div style="left:8px;top:256.5px;width:1px;height:4px;background:#000"></div>
<svg style="left:15px;top:253.5px" width="10" height="10" viewBox="0 0 10 10"><rect x="1.5" y="0.5" width="7" height="9" fill="#d8e0e8" stroke="#303030"/><rect x="2" y="1" width="6" height="2" fill="#3050d0"/></svg>
<div class="t" style="left:27px;top:254px;font-size:9px;line-height:9px;color:#1a1a28;transform:scaleX(0.867);">Berechnung, FE-Netz</div>
<div style="left:9px;top:269px;width:6px;height:1px;background:#c4c4c4"></div>
<svg style="left:15px;top:264.5px" width="10" height="10" viewBox="0 0 10 10"><path d="M2 0v9" stroke="#a0a020" stroke-width="2"/><path d="M2 3h5M2 6h5" stroke="#d8d020" stroke-width="1.5"/></svg>
<div class="t" style="left:27px;top:265px;font-size:9px;line-height:9px;color:#1a1a28;transform:scaleX(0.926);">Stahl</div>
<div style="left:9px;top:280px;width:6px;height:1px;background:#c4c4c4"></div>
<svg style="left:15px;top:275.5px" width="10" height="10" viewBox="0 0 10 10"><path d="M0 0.5h9v3h-3v6h-3v-6h-3z" fill="#30c0e0" stroke="#1080a0"/></svg>
<div class="t" style="left:27px;top:276px;font-size:9px;line-height:9px;color:#1a1a28;transform:scaleX(0.850);">Beton</div>
<div style="left:9px;top:291px;width:6px;height:1px;background:#c4c4c4"></div>
<svg style="left:15px;top:286.5px" width="10" height="10" viewBox="0 0 10 10"><path d="M0.5 1.5l4 1 4-1v7l-4 1-4-1z" fill="#f0f0d0" stroke="#303030"/><path d="M4.5 2.5v7" stroke="#303030"/></svg>
<div class="t" style="left:27px;top:287px;font-size:9px;line-height:9px;color:#1a1a28;transform:scaleX(0.902);">Dokument</div>
<div style="left:9px;top:302px;width:6px;height:1px;background:#c4c4c4"></div>
<div style="left:5px;top:299px;width:7px;height:7px;background:#fff;border:1px solid #909090;box-sizing:border-box"></div>
<div style="left:6.5px;top:302px;width:4px;height:1px;background:#000"></div>
<svg style="left:15px;top:297.5px" width="10" height="10" viewBox="0 0 10 10"><path d="M1 9h8M1 9v-8" stroke="#2030a0" stroke-width="1.3"/><path d="M2 8l6-6" stroke="#20a060" stroke-width="1.5"/></svg>
<div class="t" style="left:27px;top:298px;font-size:9px;line-height:9px;color:#1a1a28;transform:scaleX(0.888);">Zeichnungswerkzeuge</div>
<div style="left:20px;top:313px;width:6px;height:1px;background:#c4c4c4"></div>
<svg style="left:26px;top:308.5px" width="10" height="10" viewBox="0 0 10 10"><rect x="1.5" y="2.5" width="7" height="7" fill="#e0e0e0" stroke="#303030"/><rect x="3" y="4" width="3" height="3" fill="#a04040"/><path d="M3 2v-1h6v6" stroke="#303030" fill="none"/></svg>
<div class="t" style="left:38.5px;top:309px;font-size:9px;line-height:9px;color:#1a1a28;transform:scaleX(0.939);">Bildergalerie</div>
<div style="left:20px;top:323px;width:6px;height:1px;background:#c4c4c4"></div>
<svg style="left:26px;top:318.5px" width="10" height="10" viewBox="0 0 10 10"><rect x="0.5" y="0.5" width="8" height="9" fill="#fff" stroke="#303030"/><path d="M2 8l4-5v5z" fill="#e0e040" stroke="#404040"/></svg>
<div class="t" style="left:38.5px;top:319px;font-size:9px;line-height:9px;color:#1a1a28;transform:scaleX(0.897);">Zeichnungsgalerie</div>
<div style="left:20px;top:334px;width:6px;height:1px;background:#c4c4c4"></div>
<svg style="left:26px;top:329.5px" width="10" height="10" viewBox="0 0 10 10"><path d="M1 2l3 2 2 4 3 1" stroke="#c080d0" stroke-width="2.5" fill="none"/><path d="M1 2l3 2 2 4" stroke="#806030" fill="none"/></svg>
<div class="t" style="left:38.5px;top:330px;font-size:9px;line-height:9px;color:#1a1a28;transform:scaleX(0.889);">Grundrissansicht</div>
<div style="left:20px;top:345px;width:6px;height:1px;background:#c4c4c4"></div>
<svg style="left:26px;top:340.5px" width="10" height="10" viewBox="0 0 10 10"><path d="M0 7l9-5" stroke="#d0a0e0" stroke-width="3"/><path d="M1 6l3 0 2-2" stroke="#e0d040" fill="none"/></svg>
<div class="t" style="left:38.5px;top:341px;font-size:9px;line-height:9px;color:#1a1a28;transform:scaleX(0.945);">Schnitt</div>
<div style="left:20px;top:356px;width:6px;height:1px;background:#c4c4c4"></div>
<svg style="left:26px;top:351.5px" width="10" height="10" viewBox="0 0 10 10"><path d="M0 7l8-3" stroke="#e0d040" stroke-width="3"/><path d="M1 8l6-5" stroke="#c050a0" stroke-width="1"/></svg>
<div class="t" style="left:38.5px;top:352px;font-size:9px;line-height:9px;color:#1a1a28;transform:scaleX(0.877);">Allgemeiner Schnitt</div>
<div style="left:9px;top:367px;width:6px;height:1px;background:#c4c4c4"></div>
<div style="left:5px;top:364px;width:7px;height:7px;background:#fff;border:1px solid #909090;box-sizing:border-box"></div>
<div style="left:6.5px;top:367px;width:4px;height:1px;background:#000"></div>
<div style="left:8px;top:365.5px;width:1px;height:4px;background:#000"></div>
<svg style="left:15px;top:362.5px" width="10" height="10" viewBox="0 0 10 10"><rect x="1" y="0.5" width="7" height="9" fill="#404040"/><path d="M2 2h5M2 4h5M2 6h5" stroke="#a0a0a0"/></svg>
<div class="t" style="left:27px;top:363px;font-size:9px;line-height:9px;color:#1a1a28;transform:scaleX(0.938);">Bibliotheken</div>
<div style="left:9px;top:377px;width:6px;height:1px;background:#c4c4c4"></div>
<div style="left:5px;top:374px;width:7px;height:7px;background:#fff;border:1px solid #909090;box-sizing:border-box"></div>
<div style="left:6.5px;top:377px;width:4px;height:1px;background:#000"></div>
<div style="left:8px;top:375.5px;width:1px;height:4px;background:#000"></div>
<svg style="left:15px;top:372.5px" width="10" height="10" viewBox="0 0 10 10"><path d="M1 9l7-7M8 9l-6-6" stroke="#303030" stroke-width="1.6"/><path d="M0 2l3-2" stroke="#303030" stroke-width="2"/></svg>
<div class="t" style="left:27px;top:373px;font-size:9px;line-height:9px;color:#1a1a28;transform:scaleX(0.904);">Werkzeuge</div>
<div style="left:4px;top:662px;width:18px;height:13px;background:#d4d0c8;box-shadow:inset 1px 0 #fff,inset -1px -1px #404040"></div>
<svg style="left:8px;top:664px" width="10" height="9" viewBox="0 0 10 9"><rect x="0" y="0" width="3" height="3" fill="none" stroke="#404040" stroke-width="0.8"/><rect x="4" y="2" width="5" height="3" fill="#e02020"/><rect x="4" y="5" width="5" height="3" fill="#40c0e0"/><path d="M1.5 3v3h2" stroke="#404040" fill="none" stroke-width="0.8"/></svg>
<div style="left:142px;top:68px;width:41px;height:94px;background:#d4d0c8;box-shadow:inset 1px 1px #d4d0c8,inset 2px 2px #fff,inset -1px -1px #404040,inset -2px -2px #808080"></div>
<div style="left:144px;top:70px;width:39px;height:12px;background:#0a246a"></div>
<div class="t" style="left:146px;top:73px;font-size:9px;line-height:9px;color:#ffffff;font-weight:bold;transform:scaleX(0.818);">Ansicht</div>
<svg style="left:175px;top:74px" width="7" height="4" viewBox="0 0 7 4"><path d="M0 0h7l-3.5 4z" fill="#fff"/></svg>
<svg style="left:146px;top:84px" width="11" height="11" viewBox="0 0 11 11"><path d="M1 6.5l4.5-2 4.5 2-4.5 2z" fill="#40d8e8" stroke="#303030" stroke-width="0.8"/><path d="M1 6.5v2.5l4.5 2 4.5-2v-2.5M5.5 8.5v2.5" fill="#f0f0f0" stroke="#303030" stroke-width="0.8"/><path d="M5.5 4.5v-4" stroke="#3040d0" stroke-width="1.1"/><path d="M5.5 4.5l-4-2" stroke="#e04848" stroke-width="1.1"/><path d="M5.5 4.5l4-2" stroke="#30c040" stroke-width="1.1"/><path d="M0.5 0.5l2 2M2.5 0.5l-2 2" stroke="#303030" stroke-width="0.7"/></svg>
<svg style="left:159px;top:84px" width="11" height="11" viewBox="0 0 11 11"><path d="M1 6.5l4.5-2 4.5 2-4.5 2z" fill="#40d8e8" stroke="#303030" stroke-width="0.8"/><path d="M1 6.5v2.5l4.5 2 4.5-2v-2.5M5.5 8.5v2.5" fill="#f0f0f0" stroke="#303030" stroke-width="0.8"/><path d="M5.5 4.5v-4" stroke="#3040d0" stroke-width="1.1"/><path d="M5.5 4.5l-4-2" stroke="#e04848" stroke-width="1.1"/><path d="M5.5 4.5l4-2" stroke="#30c040" stroke-width="1.1"/><path d="M0.5 0.5l2 2M2.5 0.5l-2 2" stroke="#303030" stroke-width="0.7"/></svg>
<svg style="left:172px;top:84px" width="11" height="11" viewBox="0 0 11 11"><path d="M1 6.5l4.5-2 4.5 2-4.5 2z" fill="#40d8e8" stroke="#303030" stroke-width="0.8"/><path d="M1 6.5v2.5l4.5 2 4.5-2v-2.5M5.5 8.5v2.5" fill="#f0f0f0" stroke="#303030" stroke-width="0.8"/><path d="M5.5 4.5v-4" stroke="#3040d0" stroke-width="1.1"/><path d="M5.5 4.5l-4-2" stroke="#e04848" stroke-width="1.1"/><path d="M5.5 4.5l4-2" stroke="#30c040" stroke-width="1.1"/><path d="M0.5 0.5l2 2M2.5 0.5l-2 2" stroke="#303030" stroke-width="0.7"/></svg>
<svg style="left:146px;top:100px" width="11" height="11" viewBox="0 0 11 11"><path d="M5 10v-8" stroke="#3040d0" stroke-width="2"/><path d="M5 7h5" stroke="#e04040" stroke-width="2"/><path d="M5 8l-3 2" stroke="#30c030" stroke-width="1.5"/></svg>
<svg style="left:159px;top:100px" width="11" height="11" viewBox="0 0 11 11"><circle cx="5" cy="4.5" r="3.5" fill="#fff" stroke="#30c0d0" stroke-width="1.3"/><path d="M7.5 7l3 3" stroke="#202020" stroke-width="1.8"/><rect x="0" y="7.5" width="5" height="3" fill="#fff"/><path d="M1 9h3M2.5 7.5v3" stroke="#202020"/></svg>
<svg style="left:172px;top:100px" width="11" height="11" viewBox="0 0 11 11"><circle cx="5" cy="4.5" r="3.5" fill="#fff" stroke="#30c0d0" stroke-width="1.3"/><path d="M7.5 7l3 3" stroke="#202020" stroke-width="1.8"/><rect x="0" y="7.5" width="5" height="3" fill="#fff"/><path d="M1 9h3" stroke="#202020"/></svg>
<svg style="left:146px;top:116px" width="11" height="11" viewBox="0 0 11 11"><circle cx="5" cy="4.5" r="3.5" fill="#fff" stroke="#30c0d0" stroke-width="1.3"/><path d="M7.5 7l3 3" stroke="#202020" stroke-width="1.8"/><rect x="0" y="7.5" width="5" height="3" fill="#fff"/><path d="M1 9h3" stroke="#202020"/></svg>
<svg style="left:159px;top:116px" width="11" height="11" viewBox="0 0 11 11"><circle cx="5" cy="4.5" r="3.5" fill="none" stroke="#b0b0b0" stroke-width="1.2"/><path d="M3 7v3M7 7v3" stroke="#b0b0b0"/></svg>
<svg style="left:172px;top:116px" width="11" height="11" viewBox="0 0 11 11"><path d="M1 4l5-2 5 2v6l-5 1-5-1z" fill="#e8e040" stroke="#404040" stroke-width="0.8"/><path d="M3 1l2 2" stroke="#d03030"/><path d="M8 0v3" stroke="#30a030"/></svg>
<div style="left:144px;top:128px;width:38px;height:1px;background:#808080"></div>
<div style="left:144px;top:129px;width:38px;height:1px;background:#fff"></div>
<svg style="left:146px;top:133px" width="11" height="11" viewBox="0 0 11 11"><path d="M1 5h9v5h-9z" fill="none" stroke="#b8b8b8"/><path d="M3 5v-3h5l2 3" fill="none" stroke="#b8b8b8"/><path d="M2 8h7" stroke="#b8b8b8"/></svg>
<svg style="left:159px;top:133px" width="11" height="11" viewBox="0 0 11 11"><path d="M1 5h9v5h-9z" fill="none" stroke="#b8b8b8"/><path d="M3 5v-3h5l2 3" fill="none" stroke="#b8b8b8"/><path d="M2 8h7" stroke="#b8b8b8"/></svg>
<div style="left:173px;top:133px;width:1px;height:11px;background:#a0a0a0"></div>
<div style="left:174px;top:133px;width:1px;height:11px;background:#fff"></div>
<div style="left:178px;top:134px;width:5px;height:9px;background:#e0d840;box-shadow:inset 1px 1px #404040"></div>
<svg style="left:146px;top:148px" width="11" height="11" viewBox="0 0 11 11"><path d="M1 3l3-2h6v7l-3 2h-6z" fill="#3040c0" stroke="#202080"/><rect x="2" y="4" width="5" height="5" fill="#fff"/><path d="M3 8l3-4" stroke="#e0c020" stroke-width="1.5"/></svg>
<div style="left:182px;top:62px;width:778px;height:565px;background:#d4d0c8;box-shadow:inset 1px 0 #fff"></div>
<div style="left:184px;top:63px;width:774px;height:14px;background:linear-gradient(90deg,#0a246a,#a6caf0)"></div>
<svg style="left:186px;top:65px" width="9" height="10" viewBox="0 0 9 10"><rect x="0.5" y="0.5" width="8" height="9" fill="#f0f0f0" stroke="#707070"/><path d="M3 7v-4h3v4" stroke="#505050" fill="none"/></svg>
<div class="t" style="left:199px;top:66px;font-size:9px;line-height:9px;color:#ffffff;font-weight:bold;transform:scaleX(0.956);">Zeichnungsgalerie</div>
<div style="left:918px;top:64px;width:12px;height:11px;background:#d4d0c8;box-shadow:inset -1px -1px #808080,inset 1px 1px #fff"></div>
<div style="left:931px;top:64px;width:12px;height:11px;background:#d4d0c8;box-shadow:inset -1px -1px #808080,inset 1px 1px #fff"></div>
<div style="left:945px;top:64px;width:12px;height:11px;background:#d4d0c8;box-shadow:inset -1px -1px #808080,inset 1px 1px #fff"></div>
<svg style="left:922px;top:71px" width="5" height="2" viewBox="0 0 5 2"><rect width="5" height="1.2" fill="#000"/></svg>
<svg style="left:933px;top:66px" width="8" height="7" viewBox="0 0 8 7"><rect x="0.5" y="0.5" width="7" height="6" fill="none" stroke="#000"/><rect x="0" y="0" width="8" height="1.5" fill="#000"/></svg>
<svg style="left:947px;top:66px" width="8" height="7" viewBox="0 0 8 7"><path d="M1 0.5l6 6M7 0.5l-6 6" stroke="#000" stroke-width="1.5"/></svg>
<div style="left:184px;top:78px;width:22px;height:15px;background:#d4d0c8;box-shadow:inset -1px -1px #808080,inset 1px 1px #fff"></div>
<div style="left:186px;top:80px;width:1px;height:11px;background:#fff"></div>
<div style="left:187px;top:80px;width:1px;height:11px;background:#808080"></div>
<svg style="left:192px;top:80px" width="11" height="11" viewBox="0 0 11 11"><path d="M1 10l5-5" stroke="#1030f0" stroke-width="2.5"/><path d="M3 4h4v4" fill="#1030f0"/><rect x="6.5" y="0.5" width="4" height="8" fill="#c8c850" stroke="#303030"/></svg>
<div style="left:207px;top:78px;width:68px;height:15px;background:#d4d0c8;box-shadow:inset -1px -1px #808080,inset 1px 1px #fff"></div>
<svg style="left:209px;top:80px" width="11" height="11" viewBox="0 0 11 11"><path d="M2 9l7-7" stroke="#404020" stroke-width="3"/><path d="M2 9l2-2" stroke="#e0e040" stroke-width="3"/><path d="M1 10h8" stroke="#3040c0"/></svg>
<svg style="left:222px;top:80px" width="11" height="11" viewBox="0 0 11 11"><rect x="0.5" y="2.5" width="5" height="7" fill="#c8c850" stroke="#404040"/><rect x="5" y="5" width="5" height="5" fill="#40b0e0" stroke="#404040"/><path d="M8 1l-2 3" stroke="#2040d0" stroke-width="1.2"/></svg>
<svg style="left:236px;top:80px" width="11" height="11" viewBox="0 0 11 11"><rect x="0.5" y="0.5" width="5" height="9" fill="#c8c850" stroke="#404040"/><rect x="0" y="0" width="6" height="2" fill="#3040d0"/><path d="M5 5l5 5M10 5l-5 5" stroke="#e02020" stroke-width="1.5"/></svg>
<svg style="left:249px;top:80px" width="11" height="11" viewBox="0 0 11 11"><path d="M1 5h9l1 3v2h-11v-2z" fill="#909090" stroke="#404040"/><rect x="3" y="1.5" width="5" height="3.5" fill="#fff" stroke="#404040"/><rect x="3" y="8" width="5" height="1" fill="#e0e040"/></svg>
<svg style="left:262px;top:80px" width="11" height="11" viewBox="0 0 11 11"><rect x="0.5" y="0.5" width="10" height="10" fill="#202020"/><rect x="2" y="1" width="3" height="5" fill="#e0e040"/><rect x="6" y="1" width="3" height="4" fill="#c02020"/><rect x="4" y="6" width="2" height="3" fill="#fff"/></svg>
<div style="left:277px;top:78px;width:15px;height:15px;background:#d4d0c8;box-shadow:inset -1px -1px #808080,inset 1px 1px #fff"></div>
<svg style="left:280px;top:80px" width="11" height="11" viewBox="0 0 11 11"><rect x="4.5" y="0.5" width="6" height="5" fill="#fff" stroke="#2030d0"/><rect x="0.5" y="3.5" width="6" height="5" fill="#fff" stroke="#2030d0"/><circle cx="7" cy="8" r="2" fill="#60d060" stroke="#202020" stroke-width="0.6"/><path d="M8.5 9.5l2 1.5" stroke="#202020"/></svg>
<div style="left:185px;top:94px;width:73px;height:248px;background:#fff;box-shadow:inset 1px 1px #808080,inset 2px 2px #404040,inset -1px -1px #fff,inset -2px -2px #d4d0c8"></div>
<div style="left:187px;top:96px;width:57px;height:11px;background:#d4d0c8;box-shadow:inset -1px -1px #808080,inset 1px 1px #fff"></div>
<div class="t" style="left:190px;top:98px;font-size:9px;line-height:9px;color:#202020;transform:scaleX(0.875);">Name</div>
<div style="left:244px;top:96px;width:12px;height:11px;background:#d4d0c8;box-shadow:inset -1px -1px #808080,inset 1px 1px #fff"></div>
<svg style="left:247px;top:99px" width="7" height="4" viewBox="0 0 7 4"><path d="M0 4h7l-3.5-4z" fill="#000"/></svg>
<div class="t" style="left:189px;top:108px;font-size:9px;line-height:9px;color:#202020;transform:scaleX(0.789);">Plott5001</div>
<div style="left:188px;top:119px;width:37px;height:11px;background:#0a246a"></div>
<div class="t" style="left:189px;top:120px;font-size:9px;line-height:9px;color:#ffffff;transform:scaleX(0.789);">Plott5002</div>
<div class="t" style="left:189px;top:131px;font-size:9px;line-height:9px;color:#202020;transform:scaleX(0.789);">Plott5003</div>
<div class="t" style="left:189px;top:142px;font-size:9px;line-height:9px;color:#202020;transform:scaleX(0.789);">Plott5004</div>
<div class="t" style="left:189px;top:154px;font-size:9px;line-height:9px;color:#202020;transform:scaleX(0.789);">Plott5005</div>
<div class="t" style="left:189px;top:165px;font-size:9px;line-height:9px;color:#202020;transform:scaleX(0.789);">Plott5008</div>
<div class="t" style="left:189px;top:177px;font-size:9px;line-height:9px;color:#202020;transform:scaleX(0.789);">Plott1402</div>
<div class="t" style="left:189px;top:188px;font-size:9px;line-height:9px;color:#202020;transform:scaleX(0.789);">Plott1200</div>
<div class="t" style="left:189px;top:199px;font-size:9px;line-height:9px;color:#202020;transform:scaleX(0.789);">Plott1201</div>
<div class="t" style="left:189px;top:211px;font-size:9px;line-height:9px;color:#202020;transform:scaleX(0.789);">Plott1400</div>
<div class="t" style="left:189px;top:222px;font-size:9px;line-height:9px;color:#202020;transform:scaleX(0.789);">Plott1401</div>
<div class="t" style="left:189px;top:233px;font-size:9px;line-height:9px;color:#202020;transform:scaleX(0.789);">Plott1500</div>
<div class="t" style="left:189px;top:245px;font-size:9px;line-height:9px;color:#202020;transform:scaleX(0.789);">Plott1501</div>
<div class="t" style="left:189px;top:256px;font-size:9px;line-height:9px;color:#202020;transform:scaleX(0.789);">Plott1202</div>
<div class="t" style="left:189px;top:267px;font-size:9px;line-height:9px;color:#202020;transform:scaleX(0.789);">Plott1203</div>
<div class="t" style="left:189px;top:279px;font-size:9px;line-height:9px;color:#202020;transform:scaleX(0.789);">Plott1204</div>
<div class="t" style="left:189px;top:290px;font-size:9px;line-height:9px;color:#202020;transform:scaleX(0.789);">Plott1205</div>
<div class="t" style="left:189px;top:302px;font-size:9px;line-height:9px;color:#202020;transform:scaleX(0.789);">Plott1600</div>
<div class="t" style="left:189px;top:313px;font-size:9px;line-height:9px;color:#202020;transform:scaleX(0.779);">Plott GP4</div>
<div class="t" style="left:189px;top:324px;font-size:9px;line-height:9px;color:#202020;transform:scaleX(0.779);">Plott GP3</div>
<div style="left:187px;top:328px;width:57px;height:1px;background:#fff"></div>
<div style="left:244px;top:107px;width:12px;height:210px;background:#e6e4de"></div>
<div style="left:244px;top:107px;width:12px;height:83px;background:#d4d0c8;box-shadow:inset -1px -1px #808080,inset 1px 1px #fff"></div>
<div style="left:244px;top:107px;width:12px;height:83px;background:#d4d0c8;box-shadow:inset -1px -1px #404040,inset 1px 1px #fff,inset -2px -2px #808080"></div>
<div style="left:244px;top:317px;width:12px;height:11px;background:#d4d0c8;box-shadow:inset -1px -1px #404040,inset 1px 1px #fff,inset -2px -2px #808080"></div>
<svg style="left:247px;top:320px" width="7" height="4" viewBox="0 0 7 4"><path d="M0 0h7l-3.5 4z" fill="#000"/></svg>
<div style="left:187px;top:328px;width:57px;height:12px;background:#e6e4de"></div>
<div style="left:187px;top:328px;width:11px;height:12px;background:#d4d0c8;box-shadow:inset -1px -1px #404040,inset 1px 1px #fff,inset -2px -2px #808080"></div>
<svg style="left:190px;top:331px" width="4" height="7" viewBox="0 0 4 7"><path d="M4 0v7l-4-3.5z" fill="#000"/></svg>
<div style="left:198px;top:328px;width:17px;height:12px;background:#d4d0c8;box-shadow:inset -1px -1px #404040,inset 1px 1px #fff,inset -2px -2px #808080"></div>
<div style="left:232px;top:328px;width:12px;height:12px;background:#d4d0c8;box-shadow:inset -1px -1px #404040,inset 1px 1px #fff,inset -2px -2px #808080"></div>
<svg style="left:236px;top:331px" width="4" height="7" viewBox="0 0 4 7"><path d="M0 0v7l4-3.5z" fill="#000"/></svg>
<div style="left:244px;top:328px;width:12px;height:12px;background:#d4d0c8"></div>
<div style="left:185px;top:343px;width:73px;height:15px;background:#fff;box-shadow:inset 0 -1px #d4d0c8"></div>
<div style="left:186px;top:344px;width:40px;height:13px;background:#808080;box-shadow:inset -1px -1px #404040"></div>
<div class="t" style="left:189px;top:347px;font-size:9px;line-height:9px;color:#c8c8c8;transform:scaleX(0.916);">Name</div>
<div class="t" style="left:227px;top:347px;font-size:9px;line-height:9px;color:#1a1a40;transform:scaleX(0.819);">Plott5...</div>
<div style="left:184px;top:357px;width:74px;height:234px;background:#d4d0c8;box-shadow:inset 1px 0 #808080,inset -1px -1px #808080"></div>
<div style="left:259px;top:94px;width:699px;height:497px;background:#fff"></div>
<div style="left:258px;top:94px;width:1px;height:497px;background:#d4d0c8"></div>
<div class="t" style="left:187px;top:595px;font-size:9px;line-height:9px;color:#202020;transform:scaleX(0.808);">Bereit</div>
<div style="left:184px;top:606px;width:61px;height:17px;background:#d4d0c8;box-shadow:inset -1px -1px #404040,inset 1px 1px #fff,inset -2px -2px #808080"></div>
<div class="t" style="left:207.0px;top:611px;font-size:9px;line-height:9px;color:#101010;transform:scaleX(0.908);">Neu</div>
<div style="left:207.0px;top:619px;width:5.904948471169407px;height:1px;background:#202020"></div>
<div style="left:249px;top:606px;width:60px;height:17px;background:#d4d0c8;box-shadow:inset -1px -1px #404040,inset 1px 1px #fff,inset -2px -2px #808080"></div>
<div class="t" style="left:260.0px;top:611px;font-size:9px;line-height:9px;color:#101010;transform:scaleX(0.873);">Bearbeiten</div>
<div style="left:260.0px;top:619px;width:5.2401518210449805px;height:1px;background:#202020"></div>
<div style="left:313px;top:606px;width:62px;height:17px;background:#d4d0c8;box-shadow:inset -1px -1px #404040,inset 1px 1px #fff,inset -2px -2px #808080"></div>
<div class="t" style="left:329.0px;top:611px;font-size:9px;line-height:9px;color:#101010;transform:scaleX(0.882);">Löschen</div>
<div style="left:329.0px;top:619px;width:4.413059200330613px;height:1px;background:#202020"></div>
<div style="left:892px;top:606px;width:60px;height:17px;background:#d4d0c8;box-shadow:inset -1px -1px #404040,inset 1px 1px #fff,inset -2px -2px #808080"></div>
<div class="t" style="left:902.5px;top:611px;font-size:9px;line-height:9px;color:#101010;transform:scaleX(0.974);">Schließen</div>
<div style="left:908.3498972259798px;top:619px;width:4.385024859015126px;height:1px;background:#202020"></div>
<div style="left:899px;top:593px;width:16px;height:10px;box-shadow:inset 1px 1px #a0a0a0,inset -1px -1px #fff"></div>
<div class="t" style="left:901px;top:594px;font-size:9px;line-height:9px;color:#a8a8a8;transform:scaleX(0.702);">CAP</div>
<div style="left:917px;top:593px;width:20px;height:10px;box-shadow:inset 1px 1px #a0a0a0,inset -1px -1px #fff"></div>
<div class="t" style="left:919px;top:594px;font-size:9px;line-height:9px;color:#202020;font-weight:bold;transform:scaleX(0.829);">NUM</div>
<div style="left:939px;top:593px;width:19px;height:10px;box-shadow:inset 1px 1px #a0a0a0,inset -1px -1px #fff"></div>
<div class="t" style="left:941px;top:594px;font-size:9px;line-height:9px;color:#a8a8a8;transform:scaleX(0.666);">SCRL</div>
<svg style="left:947px;top:613px" width="11" height="11" viewBox="0 0 11 11"><path d="M10 1L1 10M10 4L4 10M10 7L7 10" stroke="#808080"/><path d="M10 2L2 10M10 5L5 10M10 8L8 10" stroke="#fff"/></svg>
<svg style="left:259px;top:94px" width="700" height="497" viewBox="0 0 700 497"><g transform="translate(-259 -94)"><rect x="343.5" y="137.5" width="579" height="412" fill="#fff" stroke="#c8c8c8" stroke-width="1.5" /><rect x="347.5" y="141.5" width="565.5" height="403" fill="none" stroke="#404040" stroke-width="1" /><rect x="294.5" y="189.5" width="312" height="235" fill="none" stroke="#ececec" stroke-width="1" /><rect x="557.5" y="164.5" width="353" height="275" fill="none" stroke="#ececec" stroke-width="1" /><line x1="397.5" y1="202" x2="397.5" y2="412" stroke="#a8a8a8" stroke-width="0.8" /><line x1="400" y1="202" x2="400" y2="412" stroke="#a8a8a8" stroke-width="0.8" /><line x1="420" y1="202" x2="420" y2="412" stroke="#a8a8a8" stroke-width="0.8" /><line x1="424" y1="202" x2="424" y2="412" stroke="#a8a8a8" stroke-width="0.8" /><line x1="444" y1="202" x2="444" y2="412" stroke="#a8a8a8" stroke-width="0.8" /><line x1="464" y1="202" x2="464" y2="412" stroke="#a8a8a8" stroke-width="0.8" /><line x1="466" y1="202" x2="466" y2="412" stroke="#a8a8a8" stroke-width="0.8" /><line x1="489" y1="202" x2="489" y2="412" stroke="#a8a8a8" stroke-width="0.8" /><line x1="382" y1="216" x2="495" y2="216" stroke="#a0a0a0" stroke-width="0.8" /><line x1="382" y1="231.5" x2="495" y2="231.5" stroke="#a0a0a0" stroke-width="0.8" /><line x1="382" y1="246.5" x2="495" y2="246.5" stroke="#a0a0a0" stroke-width="0.8" /><line x1="382" y1="263" x2="495" y2="263" stroke="#a0a0a0" stroke-width="0.8" /><line x1="382" y1="281" x2="495" y2="281" stroke="#a0a0a0" stroke-width="0.8" /><line x1="382" y1="297.5" x2="495" y2="297.5" stroke="#a0a0a0" stroke-width="0.8" /><line x1="382" y1="314" x2="495" y2="314" stroke="#a0a0a0" stroke-width="0.8" /><line x1="382" y1="330.5" x2="495" y2="330.5" stroke="#a0a0a0" stroke-width="0.8" /><line x1="382" y1="347" x2="495" y2="347" stroke="#a0a0a0" stroke-width="0.8" /><line x1="382" y1="363" x2="495" y2="363" stroke="#a0a0a0" stroke-width="0.8" /><line x1="382" y1="383" x2="495" y2="383" stroke="#a0a0a0" stroke-width="0.8" /><rect x="396" y="222" width="99" height="10.5" fill="#ccd8ea" stroke="none" stroke-width="1" /><rect x="396" y="237.5" width="99" height="10.0" fill="#ccd8ea" stroke="none" stroke-width="1" /><rect x="396" y="252.5" width="99" height="11.5" fill="#ccd8ea" stroke="none" stroke-width="1" /><rect x="396" y="269" width="99" height="13" fill="#ccd8ea" stroke="none" stroke-width="1" /><rect x="396" y="287" width="99" height="11.5" fill="#ccd8ea" stroke="none" stroke-width="1" /><rect x="396" y="303.5" width="99" height="11.5" fill="#ccd8ea" stroke="none" stroke-width="1" /><rect x="396" y="320" width="99" height="11.5" fill="#ccd8ea" stroke="none" stroke-width="1" /><rect x="396" y="336.5" width="99" height="11.5" fill="#ccd8ea" stroke="none" stroke-width="1" /><rect x="396" y="353" width="99" height="11" fill="#ccd8ea" stroke="none" stroke-width="1" /><rect x="396" y="369" width="99" height="15" fill="#ccd8ea" stroke="none" stroke-width="1" /><line x1="396" y1="225" x2="495" y2="225" stroke="#e8f0f8" stroke-width="0.8" /><line x1="396" y1="228" x2="495" y2="228" stroke="#e8f0f8" stroke-width="0.8" /><line x1="396" y1="231" x2="495" y2="231" stroke="#e8f0f8" stroke-width="0.8" /><line x1="396" y1="240.5" x2="495" y2="240.5" stroke="#e8f0f8" stroke-width="0.8" /><line x1="396" y1="243.5" x2="495" y2="243.5" stroke="#e8f0f8" stroke-width="0.8" /><line x1="396" y1="246.5" x2="495" y2="246.5" stroke="#e8f0f8" stroke-width="0.8" /><line x1="396" y1="255.5" x2="495" y2="255.5" stroke="#e8f0f8" stroke-width="0.8" /><line x1="396" y1="258.5" x2="495" y2="258.5" stroke="#e8f0f8" stroke-width="0.8" /><line x1="396" y1="261.5" x2="495" y2="261.5" stroke="#e8f0f8" stroke-width="0.8" /><line x1="396" y1="272" x2="495" y2="272" stroke="#e8f0f8" stroke-width="0.8" /><line x1="396" y1="275" x2="495" y2="275" stroke="#e8f0f8" stroke-width="0.8" /><line x1="396" y1="278" x2="495" y2="278" stroke="#e8f0f8" stroke-width="0.8" /><line x1="396" y1="290" x2="495" y2="290" stroke="#e8f0f8" stroke-width="0.8" /><line x1="396" y1="293" x2="495" y2="293" stroke="#e8f0f8" stroke-width="0.8" /><line x1="396" y1="296" x2="495" y2="296" stroke="#e8f0f8" stroke-width="0.8" /><line x1="396" y1="306.5" x2="495" y2="306.5" stroke="#e8f0f8" stroke-width="0.8" /><line x1="396" y1="309.5" x2="495" y2="309.5" stroke="#e8f0f8" stroke-width="0.8" /><line x1="396" y1="312.5" x2="495" y2="312.5" stroke="#e8f0f8" stroke-width="0.8" /><line x1="396" y1="323" x2="495" y2="323" stroke="#e8f0f8" stroke-width="0.8" /><line x1="396" y1="326" x2="495" y2="326" stroke="#e8f0f8" stroke-width="0.8" /><line x1="396" y1="329" x2="495" y2="329" stroke="#e8f0f8" stroke-width="0.8" /><line x1="396" y1="339.5" x2="495" y2="339.5" stroke="#e8f0f8" stroke-width="0.8" /><line x1="396" y1="342.5" x2="495" y2="342.5" stroke="#e8f0f8" stroke-width="0.8" /><line x1="396" y1="345.5" x2="495" y2="345.5" stroke="#e8f0f8" stroke-width="0.8" /><line x1="396" y1="356" x2="495" y2="356" stroke="#e8f0f8" stroke-width="0.8" /><line x1="396" y1="359" x2="495" y2="359" stroke="#e8f0f8" stroke-width="0.8" /><line x1="396" y1="362" x2="495" y2="362" stroke="#e8f0f8" stroke-width="0.8" /><line x1="396" y1="372" x2="495" y2="372" stroke="#e8f0f8" stroke-width="0.8" /><line x1="396" y1="375" x2="495" y2="375" stroke="#e8f0f8" stroke-width="0.8" /><line x1="396" y1="378" x2="495" y2="378" stroke="#e8f0f8" stroke-width="0.8" /><line x1="396" y1="221.5" x2="495" y2="221.5" stroke="#10107a" stroke-width="1.8" /><rect x="396" y="223" width="99" height="2.6" fill="#10f0f0" stroke="none" stroke-width="1" /><line x1="396" y1="226.5" x2="495" y2="226.5" stroke="#208888" stroke-width="1.2" /><line x1="396" y1="237.0" x2="495" y2="237.0" stroke="#10107a" stroke-width="1.8" /><rect x="396" y="238.5" width="99" height="2.6" fill="#10f0f0" stroke="none" stroke-width="1" /><line x1="396" y1="242.0" x2="495" y2="242.0" stroke="#208888" stroke-width="1.2" /><line x1="396" y1="252.0" x2="495" y2="252.0" stroke="#10107a" stroke-width="1.8" /><rect x="396" y="253.5" width="99" height="2.6" fill="#10f0f0" stroke="none" stroke-width="1" /><line x1="396" y1="257.0" x2="495" y2="257.0" stroke="#208888" stroke-width="1.2" /><line x1="396" y1="268.5" x2="495" y2="268.5" stroke="#10107a" stroke-width="1.8" /><rect x="396" y="270" width="99" height="2.6" fill="#10f0f0" stroke="none" stroke-width="1" /><line x1="396" y1="273.5" x2="495" y2="273.5" stroke="#208888" stroke-width="1.2" /><line x1="396" y1="286.5" x2="495" y2="286.5" stroke="#10107a" stroke-width="1.8" /><rect x="396" y="288" width="99" height="2.6" fill="#10f0f0" stroke="none" stroke-width="1" /><line x1="396" y1="291.5" x2="495" y2="291.5" stroke="#208888" stroke-width="1.2" /><line x1="396" y1="303.0" x2="495" y2="303.0" stroke="#10107a" stroke-width="1.8" /><rect x="396" y="304.5" width="99" height="2.6" fill="#10f0f0" stroke="none" stroke-width="1" /><line x1="396" y1="308.0" x2="495" y2="308.0" stroke="#208888" stroke-width="1.2" /><line x1="396" y1="319.5" x2="495" y2="319.5" stroke="#10107a" stroke-width="1.8" /><rect x="396" y="321" width="99" height="2.6" fill="#10f0f0" stroke="none" stroke-width="1" /><line x1="396" y1="324.5" x2="495" y2="324.5" stroke="#208888" stroke-width="1.2" /><line x1="396" y1="336.0" x2="495" y2="336.0" stroke="#10107a" stroke-width="1.8" /><rect x="396" y="337.5" width="99" height="2.6" fill="#10f0f0" stroke="none" stroke-width="1" /><line x1="396" y1="341.0" x2="495" y2="341.0" stroke="#208888" stroke-width="1.2" /><line x1="396" y1="352.5" x2="495" y2="352.5" stroke="#10107a" stroke-width="1.8" /><rect x="396" y="354" width="99" height="2.6" fill="#10f0f0" stroke="none" stroke-width="1" /><line x1="396" y1="357.5" x2="495" y2="357.5" stroke="#208888" stroke-width="1.2" /><line x1="396" y1="368.5" x2="495" y2="368.5" stroke="#10107a" stroke-width="1.8" /><rect x="396" y="370" width="99" height="2.6" fill="#10f0f0" stroke="none" stroke-width="1" /><line x1="396" y1="373.5" x2="495" y2="373.5" stroke="#208888" stroke-width="1.2" /><rect x="401.2" y="216" width="2.4" height="167" fill="#0a0af0" stroke="none" stroke-width="1" /><rect x="418.3" y="216" width="2.4" height="167" fill="#0a0af0" stroke="none" stroke-width="1" /><rect x="425.5" y="216" width="2.4" height="167" fill="#0a0af0" stroke="none" stroke-width="1" /><rect x="432.8" y="216" width="2.4" height="167" fill="#0a0af0" stroke="none" stroke-width="1" /><rect x="452.40000000000003" y="216" width="2.4" height="167" fill="#0a0af0" stroke="none" stroke-width="1" /><rect x="460.40000000000003" y="216" width="2.4" height="167" fill="#0a0af0" stroke="none" stroke-width="1" /><rect x="471.0" y="216" width="2.4" height="167" fill="#0a0af0" stroke="none" stroke-width="1" /><rect x="491.8" y="216" width="2.4" height="167" fill="#0a0af0" stroke="none" stroke-width="1" /><line x1="397" y1="216" x2="397" y2="383" stroke="#10107a" stroke-width="1" /><line x1="424.4" y1="216" x2="424.4" y2="383" stroke="#10107a" stroke-width="1" /><line x1="465" y1="216" x2="465" y2="383" stroke="#10107a" stroke-width="1" /><line x1="490.8" y1="216" x2="490.8" y2="383" stroke="#10107a" stroke-width="1" /><rect x="396" y="215" width="99" height="1.6" fill="#2828e0" stroke="none" stroke-width="1" /><line x1="396" y1="216" x2="396" y2="383" stroke="#2020a0" stroke-width="1" /><line x1="495" y1="216" x2="495" y2="383" stroke="#2020a0" stroke-width="1" /><rect x="427" y="293" width="34" height="9.5" fill="#fff" stroke="none" stroke-width="1" /><line x1="427.0" y1="293.5" x2="435.0" y2="302.0" stroke="#208888" stroke-width="0.8" /><line x1="435.0" y1="293.5" x2="427.0" y2="302.0" stroke="#208888" stroke-width="0.8" /><line x1="435.5" y1="293.5" x2="443.5" y2="302.0" stroke="#208888" stroke-width="0.8" /><line x1="443.5" y1="293.5" x2="435.5" y2="302.0" stroke="#208888" stroke-width="0.8" /><line x1="444.0" y1="293.5" x2="452.0" y2="302.0" stroke="#208888" stroke-width="0.8" /><line x1="452.0" y1="293.5" x2="444.0" y2="302.0" stroke="#208888" stroke-width="0.8" /><line x1="452.5" y1="293.5" x2="460.5" y2="302.0" stroke="#208888" stroke-width="0.8" /><line x1="460.5" y1="293.5" x2="452.5" y2="302.0" stroke="#208888" stroke-width="0.8" /><rect x="427" y="309.5" width="34" height="9.5" fill="#fff" stroke="none" stroke-width="1" /><line x1="427.0" y1="310.0" x2="435.0" y2="318.5" stroke="#208888" stroke-width="0.8" /><line x1="435.0" y1="310.0" x2="427.0" y2="318.5" stroke="#208888" stroke-width="0.8" /><line x1="435.5" y1="310.0" x2="443.5" y2="318.5" stroke="#208888" stroke-width="0.8" /><line x1="443.5" y1="310.0" x2="435.5" y2="318.5" stroke="#208888" stroke-width="0.8" /><line x1="444.0" y1="310.0" x2="452.0" y2="318.5" stroke="#208888" stroke-width="0.8" /><line x1="452.0" y1="310.0" x2="444.0" y2="318.5" stroke="#208888" stroke-width="0.8" /><line x1="452.5" y1="310.0" x2="460.5" y2="318.5" stroke="#208888" stroke-width="0.8" /><line x1="460.5" y1="310.0" x2="452.5" y2="318.5" stroke="#208888" stroke-width="0.8" /><rect x="427" y="326" width="34" height="9.5" fill="#fff" stroke="none" stroke-width="1" /><line x1="427.0" y1="326.5" x2="435.0" y2="335.0" stroke="#208888" stroke-width="0.8" /><line x1="435.0" y1="326.5" x2="427.0" y2="335.0" stroke="#208888" stroke-width="0.8" /><line x1="435.5" y1="326.5" x2="443.5" y2="335.0" stroke="#208888" stroke-width="0.8" /><line x1="443.5" y1="326.5" x2="435.5" y2="335.0" stroke="#208888" stroke-width="0.8" /><line x1="444.0" y1="326.5" x2="452.0" y2="335.0" stroke="#208888" stroke-width="0.8" /><line x1="452.0" y1="326.5" x2="444.0" y2="335.0" stroke="#208888" stroke-width="0.8" /><line x1="452.5" y1="326.5" x2="460.5" y2="335.0" stroke="#208888" stroke-width="0.8" /><line x1="460.5" y1="326.5" x2="452.5" y2="335.0" stroke="#208888" stroke-width="0.8" /><rect x="427" y="342.5" width="34" height="9.5" fill="#fff" stroke="none" stroke-width="1" /><line x1="427.0" y1="343.0" x2="435.0" y2="351.5" stroke="#208888" stroke-width="0.8" /><line x1="435.0" y1="343.0" x2="427.0" y2="351.5" stroke="#208888" stroke-width="0.8" /><line x1="435.5" y1="343.0" x2="443.5" y2="351.5" stroke="#208888" stroke-width="0.8" /><line x1="443.5" y1="343.0" x2="435.5" y2="351.5" stroke="#208888" stroke-width="0.8" /><line x1="444.0" y1="343.0" x2="452.0" y2="351.5" stroke="#208888" stroke-width="0.8" /><line x1="452.0" y1="343.0" x2="444.0" y2="351.5" stroke="#208888" stroke-width="0.8" /><line x1="452.5" y1="343.0" x2="460.5" y2="351.5" stroke="#208888" stroke-width="0.8" /><line x1="460.5" y1="343.0" x2="452.5" y2="351.5" stroke="#208888" stroke-width="0.8" /><rect x="428" y="245.5" width="32" height="6.0" fill="#f4f8fc" stroke="none" stroke-width="1" /><rect x="428" y="260.5" width="32" height="7.5" fill="#f4f8fc" stroke="none" stroke-width="1" /><rect x="428" y="277" width="32" height="9" fill="#f4f8fc" stroke="none" stroke-width="1" /><rect x="425.5" y="216" width="2.4" height="167" fill="#0a0af0" stroke="none" stroke-width="1" /><rect x="432.8" y="216" width="2.4" height="167" fill="#0a0af0" stroke="none" stroke-width="1" /><rect x="452.40000000000003" y="216" width="2.4" height="167" fill="#0a0af0" stroke="none" stroke-width="1" /><rect x="460.40000000000003" y="216" width="2.4" height="167" fill="#0a0af0" stroke="none" stroke-width="1" /><rect x="398" y="349" width="95" height="7" fill="#1a8080" stroke="none" stroke-width="1" /><rect x="398" y="363" width="95" height="5" fill="#1a8080" stroke="none" stroke-width="1" /><line x1="400.0" y1="350" x2="401.5" y2="351" stroke="#b0e8e8" stroke-width="0.9" /><line x1="403.9" y1="351" x2="405.4" y2="354" stroke="#b0e8e8" stroke-width="0.9" /><line x1="407.8" y1="352" x2="409.3" y2="353" stroke="#b0e8e8" stroke-width="0.9" /><line x1="411.7" y1="350" x2="413.2" y2="353" stroke="#b0e8e8" stroke-width="0.9" /><line x1="415.6" y1="351" x2="417.1" y2="352" stroke="#b0e8e8" stroke-width="0.9" /><line x1="419.5" y1="352" x2="421.0" y2="355" stroke="#b0e8e8" stroke-width="0.9" /><line x1="423.4" y1="350" x2="424.9" y2="351" stroke="#b0e8e8" stroke-width="0.9" /><line x1="427.3" y1="351" x2="428.8" y2="354" stroke="#b0e8e8" stroke-width="0.9" /><line x1="431.2" y1="352" x2="432.7" y2="353" stroke="#b0e8e8" stroke-width="0.9" /><line x1="435.1" y1="350" x2="436.6" y2="353" stroke="#b0e8e8" stroke-width="0.9" /><line x1="439.0" y1="351" x2="440.5" y2="352" stroke="#b0e8e8" stroke-width="0.9" /><line x1="442.9" y1="352" x2="444.4" y2="355" stroke="#b0e8e8" stroke-width="0.9" /><line x1="446.8" y1="350" x2="448.3" y2="351" stroke="#b0e8e8" stroke-width="0.9" /><line x1="450.7" y1="351" x2="452.2" y2="354" stroke="#b0e8e8" stroke-width="0.9" /><line x1="454.6" y1="352" x2="456.1" y2="353" stroke="#b0e8e8" stroke-width="0.9" /><line x1="458.5" y1="350" x2="460.0" y2="353" stroke="#b0e8e8" stroke-width="0.9" /><line x1="462.4" y1="351" x2="463.9" y2="352" stroke="#b0e8e8" stroke-width="0.9" /><line x1="466.3" y1="352" x2="467.8" y2="355" stroke="#b0e8e8" stroke-width="0.9" /><line x1="470.2" y1="350" x2="471.7" y2="351" stroke="#b0e8e8" stroke-width="0.9" /><line x1="474.1" y1="351" x2="475.6" y2="354" stroke="#b0e8e8" stroke-width="0.9" /><line x1="478.0" y1="352" x2="479.5" y2="353" stroke="#b0e8e8" stroke-width="0.9" /><line x1="481.9" y1="350" x2="483.4" y2="353" stroke="#b0e8e8" stroke-width="0.9" /><line x1="485.8" y1="351" x2="487.3" y2="352" stroke="#b0e8e8" stroke-width="0.9" /><line x1="489.7" y1="352" x2="491.2" y2="355" stroke="#b0e8e8" stroke-width="0.9" /><rect x="445" y="368" width="25" height="15" fill="#fff" stroke="none" stroke-width="1" /><rect x="452.8" y="368" width="2.4" height="15" fill="#0a0af0" stroke="none" stroke-width="1" /><rect x="459.8" y="368" width="2.4" height="15" fill="#0a0af0" stroke="none" stroke-width="1" /><rect x="470" y="368" width="3.5" height="15" fill="#0a0af0" stroke="none" stroke-width="1" /><line x1="396" y1="372" x2="446" y2="378" stroke="#10f0f0" stroke-width="1.5" /><line x1="427" y1="230" x2="470" y2="230" stroke="#20e020" stroke-width="1.6" /><line x1="427" y1="218" x2="427" y2="232" stroke="#20e020" stroke-width="1" /><line x1="444" y1="218" x2="444" y2="232" stroke="#20e020" stroke-width="1" /><line x1="459" y1="218" x2="459" y2="232" stroke="#20e020" stroke-width="1" /><line x1="397.5" y1="384" x2="397.5" y2="408" stroke="#909090" stroke-width="0.8" /><line x1="420" y1="384" x2="420" y2="408" stroke="#909090" stroke-width="0.8" /><line x1="424" y1="384" x2="424" y2="408" stroke="#909090" stroke-width="0.8" /><line x1="444" y1="384" x2="444" y2="408" stroke="#909090" stroke-width="0.8" /><line x1="464" y1="384" x2="464" y2="408" stroke="#909090" stroke-width="0.8" /><line x1="489" y1="384" x2="489" y2="408" stroke="#909090" stroke-width="0.8" /><line x1="396" y1="408" x2="493" y2="408" stroke="#303030" stroke-width="0.7" /><line x1="396" y1="414" x2="493" y2="414" stroke="#303030" stroke-width="0.7" /><line x1="396" y1="384" x2="396" y2="414" stroke="#303030" stroke-width="0.7" /><line x1="493" y1="384" x2="493" y2="414" stroke="#303030" stroke-width="0.7" /><rect x="396.5" y="407" width="2.5" height="1.6" fill="#202020" stroke="none" stroke-width="1" /><rect x="419" y="407" width="2.5" height="1.6" fill="#202020" stroke="none" stroke-width="1" /><rect x="423" y="407" width="2.5" height="1.6" fill="#202020" stroke="none" stroke-width="1" /><rect x="443" y="407" width="2.5" height="1.6" fill="#202020" stroke="none" stroke-width="1" /><rect x="463" y="407" width="2.5" height="1.6" fill="#202020" stroke="none" stroke-width="1" /><rect x="488" y="407" width="2.5" height="1.6" fill="#202020" stroke="none" stroke-width="1" /><line x1="516.5" y1="216" x2="516.5" y2="383" stroke="#505050" stroke-width="0.6" /><line x1="522.5" y1="216" x2="522.5" y2="383" stroke="#404040" stroke-width="0.7" /><rect x="494.5" y="222" width="2.5" height="78" fill="#50f0f0" stroke="none" stroke-width="1" /><text x="508" y="216" font-family="Liberation Sans" font-weight="bold" font-size="3.2" fill="#202020" textLength="19" lengthAdjust="spacingAndGlyphs">Decke Ebene +3.00 m</text><line x1="508" y1="217" x2="516.5" y2="217" stroke="#808080" stroke-width="0.5" /><text x="503" y="227" font-family="Liberation Sans" font-weight="bold" font-size="3.2" fill="#202020" textLength="25" lengthAdjust="spacingAndGlyphs">Decke Ebene +3.00 m</text><line x1="503" y1="228" x2="516.5" y2="228" stroke="#808080" stroke-width="0.5" /><text x="504" y="243" font-family="Liberation Sans" font-weight="bold" font-size="3.2" fill="#202020" textLength="24" lengthAdjust="spacingAndGlyphs">Decke Ebene +3.00 m</text><line x1="504" y1="244" x2="516.5" y2="244" stroke="#808080" stroke-width="0.5" /><text x="505" y="258" font-family="Liberation Sans" font-weight="bold" font-size="3.2" fill="#202020" textLength="22" lengthAdjust="spacingAndGlyphs">Decke Ebene +3.00 m</text><line x1="505" y1="259" x2="516.5" y2="259" stroke="#808080" stroke-width="0.5" /><text x="505" y="276" font-family="Liberation Sans" font-weight="bold" font-size="3.2" fill="#202020" textLength="23" lengthAdjust="spacingAndGlyphs">Decke Ebene +3.00 m</text><line x1="505" y1="277" x2="516.5" y2="277" stroke="#808080" stroke-width="0.5" /><text x="502" y="295" font-family="Liberation Sans" font-weight="bold" font-size="3.2" fill="#202020" textLength="26" lengthAdjust="spacingAndGlyphs">Decke Ebene +3.00 m</text><line x1="502" y1="296" x2="516.5" y2="296" stroke="#808080" stroke-width="0.5" /><text x="507" y="311" font-family="Liberation Sans" font-weight="bold" font-size="3.2" fill="#202020" textLength="18" lengthAdjust="spacingAndGlyphs">Decke Ebene +3.00 m</text><line x1="507" y1="312" x2="516.5" y2="312" stroke="#808080" stroke-width="0.5" /><text x="506" y="327" font-family="Liberation Sans" font-weight="bold" font-size="3.2" fill="#202020" textLength="14" lengthAdjust="spacingAndGlyphs">Decke Ebene +3.00 m</text><line x1="506" y1="328" x2="516.5" y2="328" stroke="#808080" stroke-width="0.5" /><text x="499" y="343" font-family="Liberation Sans" font-weight="bold" font-size="3.2" fill="#202020" textLength="26" lengthAdjust="spacingAndGlyphs">Decke Ebene +3.00 m</text><line x1="499" y1="344" x2="516.5" y2="344" stroke="#808080" stroke-width="0.5" /><text x="500" y="359" font-family="Liberation Sans" font-weight="bold" font-size="3.2" fill="#202020" textLength="26" lengthAdjust="spacingAndGlyphs">Decke Ebene +3.00 m</text><line x1="500" y1="360" x2="516.5" y2="360" stroke="#808080" stroke-width="0.5" /><rect x="515.5" y="230.5" width="2" height="2" fill="#303030" stroke="none" stroke-width="1" /><rect x="515.5" y="245.5" width="2" height="2" fill="#303030" stroke="none" stroke-width="1" /><rect x="515.5" y="262" width="2" height="2" fill="#303030" stroke="none" stroke-width="1" /><rect x="515.5" y="280" width="2" height="2" fill="#303030" stroke="none" stroke-width="1" /><rect x="515.5" y="296.5" width="2" height="2" fill="#303030" stroke="none" stroke-width="1" /><rect x="515.5" y="313" width="2" height="2" fill="#303030" stroke="none" stroke-width="1" /><rect x="515.5" y="329.5" width="2" height="2" fill="#303030" stroke="none" stroke-width="1" /><rect x="515.5" y="346" width="2" height="2" fill="#303030" stroke="none" stroke-width="1" /><rect x="515.5" y="362" width="2" height="2" fill="#303030" stroke="none" stroke-width="1" /><text x="0" y="0" transform="translate(499 407) rotate(-90)" font-family="Liberation Sans" font-weight="bold" font-size="3.4" fill="#202020" textLength="20" lengthAdjust="spacingAndGlyphs">Wandaufbau</text><text x="441" y="213.5" font-family="Liberation Sans" font-weight="bold" font-size="4.6" fill="#000" stroke="#000" stroke-width="0.25" textLength="28" lengthAdjust="spacingAndGlyphs">Rampe Ansicht Nord</text><text x="521" y="177.5" font-family="Liberation Sans" font-weight="bold" font-size="5.2" fill="#000" stroke="#000" stroke-width="0.35" textLength="131" lengthAdjust="spacingAndGlyphs">Deckenbelastung, Verkehrsflächen und Brandschutzfläche dotiert - Ausführung (gelöst optional)</text><line x1="545" y1="180" x2="467" y2="217" stroke="#303030" stroke-width="0.7" /><line x1="545" y1="180" x2="480" y2="215" stroke="#303030" stroke-width="0.7" /><line x1="545" y1="180" x2="495" y2="221" stroke="#303030" stroke-width="0.7" /><line x1="604" y1="179" x2="646" y2="214" stroke="#303030" stroke-width="0.7" /><line x1="604" y1="179" x2="664" y2="214" stroke="#303030" stroke-width="0.7" /><line x1="604" y1="179" x2="679" y2="216" stroke="#303030" stroke-width="0.7" /><line x1="604" y1="179" x2="692" y2="222" stroke="#303030" stroke-width="0.7" /><line x1="581.7" y1="202" x2="581.7" y2="412" stroke="#a8a8a8" stroke-width="0.8" /><line x1="606" y1="202" x2="606" y2="412" stroke="#a8a8a8" stroke-width="0.8" /><line x1="630" y1="202" x2="630" y2="412" stroke="#a8a8a8" stroke-width="0.8" /><line x1="655" y1="202" x2="655" y2="412" stroke="#a8a8a8" stroke-width="0.8" /><line x1="679" y1="202" x2="679" y2="412" stroke="#a8a8a8" stroke-width="0.8" /><line x1="704" y1="202" x2="704" y2="412" stroke="#a8a8a8" stroke-width="0.8" /><line x1="728" y1="202" x2="728" y2="412" stroke="#a8a8a8" stroke-width="0.8" /><line x1="752.7" y1="202" x2="752.7" y2="412" stroke="#a8a8a8" stroke-width="0.8" /><line x1="777" y1="202" x2="777" y2="412" stroke="#a8a8a8" stroke-width="0.8" /><line x1="800" y1="202" x2="800" y2="412" stroke="#a8a8a8" stroke-width="0.8" /><line x1="825" y1="202" x2="825" y2="412" stroke="#a8a8a8" stroke-width="0.8" /><line x1="566" y1="216" x2="828" y2="216" stroke="#a0a0a0" stroke-width="0.8" /><line x1="566" y1="231.5" x2="828" y2="231.5" stroke="#a0a0a0" stroke-width="0.8" /><line x1="566" y1="246.5" x2="828" y2="246.5" stroke="#a0a0a0" stroke-width="0.8" /><line x1="566" y1="263" x2="828" y2="263" stroke="#a0a0a0" stroke-width="0.8" /><line x1="566" y1="281" x2="828" y2="281" stroke="#a0a0a0" stroke-width="0.8" /><line x1="566" y1="297.5" x2="828" y2="297.5" stroke="#a0a0a0" stroke-width="0.8" /><line x1="566" y1="314" x2="828" y2="314" stroke="#a0a0a0" stroke-width="0.8" /><line x1="566" y1="330.5" x2="828" y2="330.5" stroke="#a0a0a0" stroke-width="0.8" /><line x1="566" y1="347" x2="828" y2="347" stroke="#a0a0a0" stroke-width="0.8" /><line x1="566" y1="363" x2="828" y2="363" stroke="#a0a0a0" stroke-width="0.8" /><line x1="566" y1="383" x2="828" y2="383" stroke="#a0a0a0" stroke-width="0.8" /><rect x="580" y="228" width="248" height="3" fill="#c8d4e4" stroke="none" stroke-width="1" /><rect x="632" y="221" width="145" height="10.5" fill="#fff" stroke="none" stroke-width="1" /><rect x="580" y="243.5" width="248" height="3" fill="#c8d4e4" stroke="none" stroke-width="1" /><rect x="632" y="236.5" width="145" height="10.0" fill="#fff" stroke="none" stroke-width="1" /><rect x="580" y="258.5" width="248" height="3" fill="#c8d4e4" stroke="none" stroke-width="1" /><rect x="632" y="251.5" width="145" height="11.5" fill="#fff" stroke="none" stroke-width="1" /><rect x="580" y="275" width="248" height="3" fill="#c8d4e4" stroke="none" stroke-width="1" /><rect x="632" y="268" width="145" height="13" fill="#fff" stroke="none" stroke-width="1" /><rect x="580" y="293" width="248" height="3" fill="#c8d4e4" stroke="none" stroke-width="1" /><rect x="632" y="286" width="145" height="11.5" fill="#fff" stroke="none" stroke-width="1" /><rect x="580" y="309.5" width="248" height="3" fill="#c8d4e4" stroke="none" stroke-width="1" /><rect x="632" y="302.5" width="145" height="11.5" fill="#fff" stroke="none" stroke-width="1" /><rect x="580" y="326" width="248" height="3" fill="#c8d4e4" stroke="none" stroke-width="1" /><rect x="632" y="319" width="145" height="11.5" fill="#fff" stroke="none" stroke-width="1" /><rect x="580" y="342.5" width="248" height="3" fill="#c8d4e4" stroke="none" stroke-width="1" /><rect x="632" y="335.5" width="145" height="11.5" fill="#fff" stroke="none" stroke-width="1" /><rect x="580" y="359" width="248" height="3" fill="#c8d4e4" stroke="none" stroke-width="1" /><rect x="632" y="352" width="145" height="11" fill="#fff" stroke="none" stroke-width="1" /><rect x="580" y="375" width="248" height="3" fill="#c8d4e4" stroke="none" stroke-width="1" /><rect x="632" y="368" width="145" height="15" fill="#fff" stroke="none" stroke-width="1" /><line x1="580" y1="221.5" x2="632" y2="221.5" stroke="#10107a" stroke-width="1.8" /><rect x="580" y="223" width="52" height="2.6" fill="#10f0f0" stroke="none" stroke-width="1" /><line x1="580" y1="226.5" x2="632" y2="226.5" stroke="#208888" stroke-width="2.2" /><line x1="777" y1="221.5" x2="828" y2="221.5" stroke="#10107a" stroke-width="1.8" /><rect x="777" y="223" width="51" height="2.6" fill="#10f0f0" stroke="none" stroke-width="1" /><line x1="777" y1="226.5" x2="828" y2="226.5" stroke="#208888" stroke-width="2.2" /><line x1="580" y1="237.0" x2="632" y2="237.0" stroke="#10107a" stroke-width="1.8" /><rect x="580" y="238.5" width="52" height="2.6" fill="#10f0f0" stroke="none" stroke-width="1" /><line x1="580" y1="242.0" x2="632" y2="242.0" stroke="#208888" stroke-width="2.2" /><line x1="777" y1="237.0" x2="828" y2="237.0" stroke="#10107a" stroke-width="1.8" /><rect x="777" y="238.5" width="51" height="2.6" fill="#10f0f0" stroke="none" stroke-width="1" /><line x1="777" y1="242.0" x2="828" y2="242.0" stroke="#208888" stroke-width="2.2" /><line x1="580" y1="252.0" x2="632" y2="252.0" stroke="#10107a" stroke-width="1.8" /><rect x="580" y="253.5" width="52" height="2.6" fill="#10f0f0" stroke="none" stroke-width="1" /><line x1="580" y1="257.0" x2="632" y2="257.0" stroke="#208888" stroke-width="2.2" /><line x1="777" y1="252.0" x2="828" y2="252.0" stroke="#10107a" stroke-width="1.8" /><rect x="777" y="253.5" width="51" height="2.6" fill="#10f0f0" stroke="none" stroke-width="1" /><line x1="777" y1="257.0" x2="828" y2="257.0" stroke="#208888" stroke-width="2.2" /><line x1="580" y1="268.5" x2="632" y2="268.5" stroke="#10107a" stroke-width="1.8" /><rect x="580" y="270" width="52" height="2.6" fill="#10f0f0" stroke="none" stroke-width="1" /><line x1="580" y1="273.5" x2="632" y2="273.5" stroke="#208888" stroke-width="2.2" /><line x1="777" y1="268.5" x2="828" y2="268.5" stroke="#10107a" stroke-width="1.8" /><rect x="777" y="270" width="51" height="2.6" fill="#10f0f0" stroke="none" stroke-width="1" /><line x1="777" y1="273.5" x2="828" y2="273.5" stroke="#208888" stroke-width="2.2" /><line x1="580" y1="286.5" x2="632" y2="286.5" stroke="#10107a" stroke-width="1.8" /><rect x="580" y="288" width="52" height="2.6" fill="#10f0f0" stroke="none" stroke-width="1" /><line x1="580" y1="291.5" x2="632" y2="291.5" stroke="#208888" stroke-width="2.2" /><line x1="777" y1="286.5" x2="828" y2="286.5" stroke="#10107a" stroke-width="1.8" /><rect x="777" y="288" width="51" height="2.6" fill="#10f0f0" stroke="none" stroke-width="1" /><line x1="777" y1="291.5" x2="828" y2="291.5" stroke="#208888" stroke-width="2.2" /><line x1="580" y1="303.0" x2="632" y2="303.0" stroke="#10107a" stroke-width="1.8" /><rect x="580" y="304.5" width="52" height="2.6" fill="#10f0f0" stroke="none" stroke-width="1" /><line x1="580" y1="308.0" x2="632" y2="308.0" stroke="#208888" stroke-width="2.2" /><line x1="777" y1="303.0" x2="828" y2="303.0" stroke="#10107a" stroke-width="1.8" /><rect x="777" y="304.5" width="51" height="2.6" fill="#10f0f0" stroke="none" stroke-width="1" /><line x1="777" y1="308.0" x2="828" y2="308.0" stroke="#208888" stroke-width="2.2" /><line x1="580" y1="319.5" x2="632" y2="319.5" stroke="#10107a" stroke-width="1.8" /><rect x="580" y="321" width="52" height="2.6" fill="#10f0f0" stroke="none" stroke-width="1" /><line x1="580" y1="324.5" x2="632" y2="324.5" stroke="#208888" stroke-width="2.2" /><line x1="777" y1="319.5" x2="828" y2="319.5" stroke="#10107a" stroke-width="1.8" /><rect x="777" y="321" width="51" height="2.6" fill="#10f0f0" stroke="none" stroke-width="1" /><line x1="777" y1="324.5" x2="828" y2="324.5" stroke="#208888" stroke-width="2.2" /><line x1="580" y1="336.0" x2="632" y2="336.0" stroke="#10107a" stroke-width="1.8" /><rect x="580" y="337.5" width="52" height="2.6" fill="#10f0f0" stroke="none" stroke-width="1" /><line x1="580" y1="341.0" x2="632" y2="341.0" stroke="#208888" stroke-width="2.2" /><line x1="777" y1="336.0" x2="828" y2="336.0" stroke="#10107a" stroke-width="1.8" /><rect x="777" y="337.5" width="51" height="2.6" fill="#10f0f0" stroke="none" stroke-width="1" /><line x1="777" y1="341.0" x2="828" y2="341.0" stroke="#208888" stroke-width="2.2" /><line x1="580" y1="352.5" x2="632" y2="352.5" stroke="#10107a" stroke-width="1.8" /><rect x="580" y="354" width="52" height="2.6" fill="#10f0f0" stroke="none" stroke-width="1" /><line x1="580" y1="357.5" x2="632" y2="357.5" stroke="#208888" stroke-width="2.2" /><line x1="777" y1="352.5" x2="828" y2="352.5" stroke="#10107a" stroke-width="1.8" /><rect x="777" y="354" width="51" height="2.6" fill="#10f0f0" stroke="none" stroke-width="1" /><line x1="777" y1="357.5" x2="828" y2="357.5" stroke="#208888" stroke-width="2.2" /><line x1="580" y1="368.5" x2="632" y2="368.5" stroke="#10107a" stroke-width="1.8" /><rect x="580" y="370" width="52" height="2.6" fill="#10f0f0" stroke="none" stroke-width="1" /><line x1="580" y1="373.5" x2="632" y2="373.5" stroke="#208888" stroke-width="2.2" /><line x1="777" y1="368.5" x2="828" y2="368.5" stroke="#10107a" stroke-width="1.8" /><rect x="777" y="370" width="51" height="2.6" fill="#10f0f0" stroke="none" stroke-width="1" /><line x1="777" y1="373.5" x2="828" y2="373.5" stroke="#208888" stroke-width="2.2" /><rect x="586.8" y="216" width="2.4" height="167" fill="#0a0af0" stroke="none" stroke-width="1" /><rect x="604.8" y="216" width="2.4" height="167" fill="#0a0af0" stroke="none" stroke-width="1" /><rect x="611.8" y="216" width="2.4" height="167" fill="#0a0af0" stroke="none" stroke-width="1" /><rect x="620.8" y="216" width="2.4" height="167" fill="#0a0af0" stroke="none" stroke-width="1" /><rect x="702.8" y="216" width="2.4" height="167" fill="#0a0af0" stroke="none" stroke-width="1" /><rect x="776.8" y="216" width="2.4" height="167" fill="#0a0af0" stroke="none" stroke-width="1" /><rect x="785.8" y="216" width="2.4" height="167" fill="#0a0af0" stroke="none" stroke-width="1" /><rect x="792.8" y="216" width="2.4" height="167" fill="#0a0af0" stroke="none" stroke-width="1" /><rect x="817.8" y="216" width="2.4" height="167" fill="#0a0af0" stroke="none" stroke-width="1" /><line x1="581" y1="216" x2="581" y2="383" stroke="#10107a" stroke-width="1" /><line x1="631" y1="216" x2="631" y2="383" stroke="#10107a" stroke-width="1" /><line x1="655" y1="216" x2="655" y2="383" stroke="#10107a" stroke-width="1" /><line x1="679" y1="216" x2="679" y2="383" stroke="#10107a" stroke-width="1" /><line x1="728" y1="216" x2="728" y2="383" stroke="#10107a" stroke-width="1" /><line x1="752" y1="216" x2="752" y2="383" stroke="#10107a" stroke-width="1" /><line x1="779" y1="216" x2="779" y2="383" stroke="#10107a" stroke-width="1" /><line x1="826" y1="216" x2="826" y2="383" stroke="#10107a" stroke-width="1" /><rect x="580" y="215" width="248" height="1.6" fill="#2828e0" stroke="none" stroke-width="1" /><line x1="580" y1="216" x2="580" y2="383" stroke="#2020a0" stroke-width="1" /><line x1="828" y1="216" x2="828" y2="383" stroke="#2020a0" stroke-width="1" /><path d="M600 225 L631 226 L777 241.5 L808 242.5 M600 242.5 L631 241.5 L777 226 L808 225" stroke="#10f0f0" stroke-width="2.8" fill="none"/><path d="M631 229 L777 244.5 M631 244.5 L777 229" stroke="#208888" stroke-width="1.3" fill="none"/><path d="M600 240.5 L631 241.5 L777 256.5 L808 257.5 M600 257.5 L631 256.5 L777 241.5 L808 240.5" stroke="#10f0f0" stroke-width="2.8" fill="none"/><path d="M631 244.5 L777 259.5 M631 259.5 L777 244.5" stroke="#208888" stroke-width="1.3" fill="none"/><path d="M600 255.5 L631 256.5 L777 273 L808 274 M600 274 L631 273 L777 256.5 L808 255.5" stroke="#10f0f0" stroke-width="2.8" fill="none"/><path d="M631 259.5 L777 276 M631 276 L777 259.5" stroke="#208888" stroke-width="1.3" fill="none"/><path d="M600 272 L631 273 L777 291 L808 292 M600 292 L631 291 L777 273 L808 272" stroke="#10f0f0" stroke-width="2.8" fill="none"/><path d="M631 276 L777 294 M631 294 L777 276" stroke="#208888" stroke-width="1.3" fill="none"/><path d="M600 290 L631 291 L777 307.5 L808 308.5 M600 308.5 L631 307.5 L777 291 L808 290" stroke="#10f0f0" stroke-width="2.8" fill="none"/><path d="M631 294 L777 310.5 M631 310.5 L777 294" stroke="#208888" stroke-width="1.3" fill="none"/><path d="M600 306.5 L631 307.5 L777 324 L808 325 M600 325 L631 324 L777 307.5 L808 306.5" stroke="#10f0f0" stroke-width="2.8" fill="none"/><path d="M631 310.5 L777 327 M631 327 L777 310.5" stroke="#208888" stroke-width="1.3" fill="none"/><path d="M600 323 L631 324 L777 340.5 L808 341.5 M600 341.5 L631 340.5 L777 324 L808 323" stroke="#10f0f0" stroke-width="2.8" fill="none"/><path d="M631 327 L777 343.5 M631 343.5 L777 327" stroke="#208888" stroke-width="1.3" fill="none"/><path d="M600 339.5 L631 340.5 L777 357 L808 358 M600 358 L631 357 L777 340.5 L808 339.5" stroke="#10f0f0" stroke-width="2.8" fill="none"/><path d="M631 343.5 L777 360 M631 360 L777 343.5" stroke="#208888" stroke-width="1.3" fill="none"/><path d="M600 356 L631 357 L777 373 L808 374 M600 374 L631 373 L777 357 L808 356" stroke="#10f0f0" stroke-width="2.8" fill="none"/><path d="M631 360 L777 376 M631 376 L777 360" stroke="#208888" stroke-width="1.3" fill="none"/><path d="M631 222 L777 237.5 M631 237.5 L777 222" stroke="#10107a" stroke-width="1.2" fill="none"/><path d="M631 237.5 L777 252.5 M631 252.5 L777 237.5" stroke="#10107a" stroke-width="1.2" fill="none"/><path d="M631 252.5 L777 269 M631 269 L777 252.5" stroke="#10107a" stroke-width="1.2" fill="none"/><path d="M631 269 L777 287 M631 287 L777 269" stroke="#10107a" stroke-width="1.2" fill="none"/><path d="M631 287 L777 303.5 M631 303.5 L777 287" stroke="#10107a" stroke-width="1.2" fill="none"/><path d="M631 303.5 L777 320 M631 320 L777 303.5" stroke="#10107a" stroke-width="1.2" fill="none"/><path d="M631 320 L777 336.5 M631 336.5 L777 320" stroke="#10107a" stroke-width="1.2" fill="none"/><path d="M631 336.5 L777 353 M631 353 L777 336.5" stroke="#10107a" stroke-width="1.2" fill="none"/><path d="M631 353 L777 369 M631 369 L777 353" stroke="#10107a" stroke-width="1.2" fill="none"/><path d="M631 369 L777 382 M631 382 L777 369" stroke="#10107a" stroke-width="1.2" fill="none"/><line x1="655" y1="222" x2="667" y2="231.5" stroke="#70d8e0" stroke-width="0.8" /><line x1="679" y1="222" x2="667" y2="231.5" stroke="#70d8e0" stroke-width="0.8" /><line x1="679" y1="222" x2="691" y2="231.5" stroke="#70d8e0" stroke-width="0.8" /><line x1="703" y1="222" x2="691" y2="231.5" stroke="#70d8e0" stroke-width="0.8" /><line x1="704" y1="222" x2="716" y2="231.5" stroke="#70d8e0" stroke-width="0.8" /><line x1="728" y1="222" x2="716" y2="231.5" stroke="#70d8e0" stroke-width="0.8" /><line x1="728" y1="222" x2="740" y2="231.5" stroke="#70d8e0" stroke-width="0.8" /><line x1="752" y1="222" x2="740" y2="231.5" stroke="#70d8e0" stroke-width="0.8" /><line x1="655" y1="237.5" x2="667" y2="246.5" stroke="#70d8e0" stroke-width="0.8" /><line x1="679" y1="237.5" x2="667" y2="246.5" stroke="#70d8e0" stroke-width="0.8" /><line x1="679" y1="237.5" x2="691" y2="246.5" stroke="#70d8e0" stroke-width="0.8" /><line x1="703" y1="237.5" x2="691" y2="246.5" stroke="#70d8e0" stroke-width="0.8" /><line x1="704" y1="237.5" x2="716" y2="246.5" stroke="#70d8e0" stroke-width="0.8" /><line x1="728" y1="237.5" x2="716" y2="246.5" stroke="#70d8e0" stroke-width="0.8" /><line x1="728" y1="237.5" x2="740" y2="246.5" stroke="#70d8e0" stroke-width="0.8" /><line x1="752" y1="237.5" x2="740" y2="246.5" stroke="#70d8e0" stroke-width="0.8" /><line x1="655" y1="252.5" x2="667" y2="263" stroke="#70d8e0" stroke-width="0.8" /><line x1="679" y1="252.5" x2="667" y2="263" stroke="#70d8e0" stroke-width="0.8" /><line x1="679" y1="252.5" x2="691" y2="263" stroke="#70d8e0" stroke-width="0.8" /><line x1="703" y1="252.5" x2="691" y2="263" stroke="#70d8e0" stroke-width="0.8" /><line x1="704" y1="252.5" x2="716" y2="263" stroke="#70d8e0" stroke-width="0.8" /><line x1="728" y1="252.5" x2="716" y2="263" stroke="#70d8e0" stroke-width="0.8" /><line x1="728" y1="252.5" x2="740" y2="263" stroke="#70d8e0" stroke-width="0.8" /><line x1="752" y1="252.5" x2="740" y2="263" stroke="#70d8e0" stroke-width="0.8" /><line x1="655" y1="269" x2="667" y2="281" stroke="#70d8e0" stroke-width="0.8" /><line x1="679" y1="269" x2="667" y2="281" stroke="#70d8e0" stroke-width="0.8" /><line x1="679" y1="269" x2="691" y2="281" stroke="#70d8e0" stroke-width="0.8" /><line x1="703" y1="269" x2="691" y2="281" stroke="#70d8e0" stroke-width="0.8" /><line x1="704" y1="269" x2="716" y2="281" stroke="#70d8e0" stroke-width="0.8" /><line x1="728" y1="269" x2="716" y2="281" stroke="#70d8e0" stroke-width="0.8" /><line x1="728" y1="269" x2="740" y2="281" stroke="#70d8e0" stroke-width="0.8" /><line x1="752" y1="269" x2="740" y2="281" stroke="#70d8e0" stroke-width="0.8" /><line x1="655" y1="287" x2="667" y2="297.5" stroke="#70d8e0" stroke-width="0.8" /><line x1="679" y1="287" x2="667" y2="297.5" stroke="#70d8e0" stroke-width="0.8" /><line x1="679" y1="287" x2="691" y2="297.5" stroke="#70d8e0" stroke-width="0.8" /><line x1="703" y1="287" x2="691" y2="297.5" stroke="#70d8e0" stroke-width="0.8" /><line x1="704" y1="287" x2="716" y2="297.5" stroke="#70d8e0" stroke-width="0.8" /><line x1="728" y1="287" x2="716" y2="297.5" stroke="#70d8e0" stroke-width="0.8" /><line x1="728" y1="287" x2="740" y2="297.5" stroke="#70d8e0" stroke-width="0.8" /><line x1="752" y1="287" x2="740" y2="297.5" stroke="#70d8e0" stroke-width="0.8" /><line x1="655" y1="303.5" x2="667" y2="314" stroke="#70d8e0" stroke-width="0.8" /><line x1="679" y1="303.5" x2="667" y2="314" stroke="#70d8e0" stroke-width="0.8" /><line x1="679" y1="303.5" x2="691" y2="314" stroke="#70d8e0" stroke-width="0.8" /><line x1="703" y1="303.5" x2="691" y2="314" stroke="#70d8e0" stroke-width="0.8" /><line x1="704" y1="303.5" x2="716" y2="314" stroke="#70d8e0" stroke-width="0.8" /><line x1="728" y1="303.5" x2="716" y2="314" stroke="#70d8e0" stroke-width="0.8" /><line x1="728" y1="303.5" x2="740" y2="314" stroke="#70d8e0" stroke-width="0.8" /><line x1="752" y1="303.5" x2="740" y2="314" stroke="#70d8e0" stroke-width="0.8" /><line x1="655" y1="320" x2="667" y2="330.5" stroke="#70d8e0" stroke-width="0.8" /><line x1="679" y1="320" x2="667" y2="330.5" stroke="#70d8e0" stroke-width="0.8" /><line x1="679" y1="320" x2="691" y2="330.5" stroke="#70d8e0" stroke-width="0.8" /><line x1="703" y1="320" x2="691" y2="330.5" stroke="#70d8e0" stroke-width="0.8" /><line x1="704" y1="320" x2="716" y2="330.5" stroke="#70d8e0" stroke-width="0.8" /><line x1="728" y1="320" x2="716" y2="330.5" stroke="#70d8e0" stroke-width="0.8" /><line x1="728" y1="320" x2="740" y2="330.5" stroke="#70d8e0" stroke-width="0.8" /><line x1="752" y1="320" x2="740" y2="330.5" stroke="#70d8e0" stroke-width="0.8" /><line x1="655" y1="336.5" x2="667" y2="347" stroke="#70d8e0" stroke-width="0.8" /><line x1="679" y1="336.5" x2="667" y2="347" stroke="#70d8e0" stroke-width="0.8" /><line x1="679" y1="336.5" x2="691" y2="347" stroke="#70d8e0" stroke-width="0.8" /><line x1="703" y1="336.5" x2="691" y2="347" stroke="#70d8e0" stroke-width="0.8" /><line x1="704" y1="336.5" x2="716" y2="347" stroke="#70d8e0" stroke-width="0.8" /><line x1="728" y1="336.5" x2="716" y2="347" stroke="#70d8e0" stroke-width="0.8" /><line x1="728" y1="336.5" x2="740" y2="347" stroke="#70d8e0" stroke-width="0.8" /><line x1="752" y1="336.5" x2="740" y2="347" stroke="#70d8e0" stroke-width="0.8" /><line x1="655" y1="353" x2="667" y2="363" stroke="#70d8e0" stroke-width="0.8" /><line x1="679" y1="353" x2="667" y2="363" stroke="#70d8e0" stroke-width="0.8" /><line x1="679" y1="353" x2="691" y2="363" stroke="#70d8e0" stroke-width="0.8" /><line x1="703" y1="353" x2="691" y2="363" stroke="#70d8e0" stroke-width="0.8" /><line x1="704" y1="353" x2="716" y2="363" stroke="#70d8e0" stroke-width="0.8" /><line x1="728" y1="353" x2="716" y2="363" stroke="#70d8e0" stroke-width="0.8" /><line x1="728" y1="353" x2="740" y2="363" stroke="#70d8e0" stroke-width="0.8" /><line x1="752" y1="353" x2="740" y2="363" stroke="#70d8e0" stroke-width="0.8" /><line x1="655" y1="369" x2="667" y2="383" stroke="#70d8e0" stroke-width="0.8" /><line x1="679" y1="369" x2="667" y2="383" stroke="#70d8e0" stroke-width="0.8" /><line x1="679" y1="369" x2="691" y2="383" stroke="#70d8e0" stroke-width="0.8" /><line x1="703" y1="369" x2="691" y2="383" stroke="#70d8e0" stroke-width="0.8" /><line x1="704" y1="369" x2="716" y2="383" stroke="#70d8e0" stroke-width="0.8" /><line x1="728" y1="369" x2="716" y2="383" stroke="#70d8e0" stroke-width="0.8" /><line x1="728" y1="369" x2="740" y2="383" stroke="#70d8e0" stroke-width="0.8" /><line x1="752" y1="369" x2="740" y2="383" stroke="#70d8e0" stroke-width="0.8" /><rect x="586.8" y="216" width="2.4" height="167" fill="#0a0af0" stroke="none" stroke-width="1" /><rect x="604.8" y="216" width="2.4" height="167" fill="#0a0af0" stroke="none" stroke-width="1" /><rect x="611.8" y="216" width="2.4" height="167" fill="#0a0af0" stroke="none" stroke-width="1" /><rect x="620.8" y="216" width="2.4" height="167" fill="#0a0af0" stroke="none" stroke-width="1" /><rect x="702.8" y="216" width="2.4" height="167" fill="#0a0af0" stroke="none" stroke-width="1" /><rect x="776.8" y="216" width="2.4" height="167" fill="#0a0af0" stroke="none" stroke-width="1" /><rect x="785.8" y="216" width="2.4" height="167" fill="#0a0af0" stroke="none" stroke-width="1" /><rect x="792.8" y="216" width="2.4" height="167" fill="#0a0af0" stroke="none" stroke-width="1" /><rect x="817.8" y="216" width="2.4" height="167" fill="#0a0af0" stroke="none" stroke-width="1" /><rect x="654.2" y="216" width="1.6" height="167" fill="#2020c0" stroke="none" stroke-width="1" /><rect x="727.2" y="216" width="1.6" height="167" fill="#2020c0" stroke="none" stroke-width="1" /><rect x="580" y="215" width="248" height="2" fill="#2828e0" stroke="none" stroke-width="1" /><line x1="580" y1="383" x2="828" y2="383" stroke="#606060" stroke-width="1.2" /><line x1="644" y1="216" x2="644" y2="236" stroke="#20d020" stroke-width="1.2" /><line x1="668" y1="216" x2="668" y2="236" stroke="#20d020" stroke-width="1.2" /><line x1="693" y1="216" x2="693" y2="236" stroke="#20d020" stroke-width="1.2" /><line x1="710" y1="216" x2="710" y2="236" stroke="#20d020" stroke-width="1.2" /><path d="M655 218 l10 12 l12 -12 M680 218 l10 12 l12-12" stroke="#40b040" fill="none" stroke-width="1"/><rect x="778" y="346" width="50" height="14" fill="#1a8080" stroke="none" stroke-width="1" /><rect x="778" y="361" width="50" height="4" fill="#1a8080" stroke="none" stroke-width="1" /><line x1="781.0" y1="350" x2="783.0" y2="355" stroke="#a8e0e0" stroke-width="0.8" /><line x1="785.5" y1="351" x2="787.5" y2="355" stroke="#a8e0e0" stroke-width="0.8" /><line x1="790.0" y1="350" x2="792.0" y2="355" stroke="#a8e0e0" stroke-width="0.8" /><line x1="794.5" y1="351" x2="796.5" y2="355" stroke="#a8e0e0" stroke-width="0.8" /><line x1="799.0" y1="350" x2="801.0" y2="355" stroke="#a8e0e0" stroke-width="0.8" /><line x1="803.5" y1="351" x2="805.5" y2="355" stroke="#a8e0e0" stroke-width="0.8" /><line x1="808.0" y1="350" x2="810.0" y2="355" stroke="#a8e0e0" stroke-width="0.8" /><line x1="812.5" y1="351" x2="814.5" y2="355" stroke="#a8e0e0" stroke-width="0.8" /><line x1="817.0" y1="350" x2="819.0" y2="355" stroke="#a8e0e0" stroke-width="0.8" /><line x1="821.5" y1="351" x2="823.5" y2="355" stroke="#a8e0e0" stroke-width="0.8" /><rect x="779" y="365.5" width="47" height="17" fill="#fff" stroke="none" stroke-width="1" /><rect x="785.9" y="365" width="2.2" height="18" fill="#0a0af0" stroke="none" stroke-width="1" /><rect x="792.9" y="365" width="2.2" height="18" fill="#0a0af0" stroke="none" stroke-width="1" /><rect x="798.9" y="365" width="2.2" height="18" fill="#0a0af0" stroke="none" stroke-width="1" /><rect x="817.9" y="365" width="2.2" height="18" fill="#0a0af0" stroke="none" stroke-width="1" /><rect x="824.9" y="365" width="2.2" height="18" fill="#0a0af0" stroke="none" stroke-width="1" /><path d="M600 372 L631 371 L777 381 M631 381 L777 371" stroke="#10f0f0" stroke-width="2.5" fill="none"/><text x="683" y="213.5" font-family="Liberation Sans" font-size="4.4" fill="#202020" textLength="40" lengthAdjust="spacingAndGlyphs">Rampe Ansicht West</text><line x1="580" y1="406.5" x2="828" y2="406.5" stroke="#303030" stroke-width="0.7" /><line x1="580" y1="413" x2="828" y2="413" stroke="#303030" stroke-width="0.7" /><line x1="581" y1="383" x2="581" y2="413" stroke="#303030" stroke-width="0.7" /><line x1="828" y1="383" x2="828" y2="413" stroke="#303030" stroke-width="0.7" /><rect x="580.7" y="405.5" width="2.5" height="1.6" fill="#202020" stroke="none" stroke-width="1" /><rect x="605" y="405.5" width="2.5" height="1.6" fill="#202020" stroke="none" stroke-width="1" /><rect x="629" y="405.5" width="2.5" height="1.6" fill="#202020" stroke="none" stroke-width="1" /><rect x="654" y="405.5" width="2.5" height="1.6" fill="#202020" stroke="none" stroke-width="1" /><rect x="678" y="405.5" width="2.5" height="1.6" fill="#202020" stroke="none" stroke-width="1" /><rect x="703" y="405.5" width="2.5" height="1.6" fill="#202020" stroke="none" stroke-width="1" /><rect x="727" y="405.5" width="2.5" height="1.6" fill="#202020" stroke="none" stroke-width="1" /><rect x="751.7" y="405.5" width="2.5" height="1.6" fill="#202020" stroke="none" stroke-width="1" /><rect x="776" y="405.5" width="2.5" height="1.6" fill="#202020" stroke="none" stroke-width="1" /><rect x="799" y="405.5" width="2.5" height="1.6" fill="#202020" stroke="none" stroke-width="1" /><rect x="824" y="405.5" width="2.5" height="1.6" fill="#202020" stroke="none" stroke-width="1" /><line x1="851.5" y1="216" x2="851.5" y2="383" stroke="#404040" stroke-width="0.6" /><line x1="857.5" y1="216" x2="857.5" y2="383" stroke="#303030" stroke-width="0.8" /><line x1="828" y1="216.5" x2="857.5" y2="216.5" stroke="#303030" stroke-width="0.6" /><line x1="828" y1="382.5" x2="857.5" y2="382.5" stroke="#303030" stroke-width="0.6" /><line x1="828" y1="231.5" x2="851" y2="231.5" stroke="#909090" stroke-width="0.5" /><rect x="850.5" y="230.5" width="2" height="2" fill="#303030" stroke="none" stroke-width="1" /><line x1="828" y1="246.5" x2="851" y2="246.5" stroke="#909090" stroke-width="0.5" /><rect x="850.5" y="245.5" width="2" height="2" fill="#303030" stroke="none" stroke-width="1" /><line x1="828" y1="263" x2="851" y2="263" stroke="#909090" stroke-width="0.5" /><rect x="850.5" y="262" width="2" height="2" fill="#303030" stroke="none" stroke-width="1" /><line x1="828" y1="281" x2="851" y2="281" stroke="#909090" stroke-width="0.5" /><rect x="850.5" y="280" width="2" height="2" fill="#303030" stroke="none" stroke-width="1" /><line x1="828" y1="297.5" x2="851" y2="297.5" stroke="#909090" stroke-width="0.5" /><rect x="850.5" y="296.5" width="2" height="2" fill="#303030" stroke="none" stroke-width="1" /><line x1="828" y1="314" x2="851" y2="314" stroke="#909090" stroke-width="0.5" /><rect x="850.5" y="313" width="2" height="2" fill="#303030" stroke="none" stroke-width="1" /><line x1="828" y1="330.5" x2="851" y2="330.5" stroke="#909090" stroke-width="0.5" /><rect x="850.5" y="329.5" width="2" height="2" fill="#303030" stroke="none" stroke-width="1" /><line x1="828" y1="347" x2="851" y2="347" stroke="#909090" stroke-width="0.5" /><rect x="850.5" y="346" width="2" height="2" fill="#303030" stroke="none" stroke-width="1" /><line x1="828" y1="363" x2="851" y2="363" stroke="#909090" stroke-width="0.5" /><rect x="850.5" y="362" width="2" height="2" fill="#303030" stroke="none" stroke-width="1" /><text x="830" y="215" font-family="Liberation Sans" font-weight="bold" font-size="3.2" fill="#202020" textLength="12" lengthAdjust="spacingAndGlyphs">+3.000 m</text><text x="828" y="227" font-family="Liberation Sans" font-weight="bold" font-size="3.2" fill="#202020" textLength="18" lengthAdjust="spacingAndGlyphs">+3.000 m</text><text x="838" y="245" font-family="Liberation Sans" font-weight="bold" font-size="3.2" fill="#202020" textLength="10" lengthAdjust="spacingAndGlyphs">+3.000 m</text><text x="838" y="262" font-family="Liberation Sans" font-weight="bold" font-size="3.2" fill="#202020" textLength="10" lengthAdjust="spacingAndGlyphs">+3.000 m</text><text x="836" y="279" font-family="Liberation Sans" font-weight="bold" font-size="3.2" fill="#202020" textLength="12" lengthAdjust="spacingAndGlyphs">+3.000 m</text><text x="837" y="297" font-family="Liberation Sans" font-weight="bold" font-size="3.2" fill="#202020" textLength="10" lengthAdjust="spacingAndGlyphs">+3.000 m</text><text x="837" y="313" font-family="Liberation Sans" font-weight="bold" font-size="3.2" fill="#202020" textLength="10" lengthAdjust="spacingAndGlyphs">+3.000 m</text><text x="837" y="330" font-family="Liberation Sans" font-weight="bold" font-size="3.2" fill="#202020" textLength="10" lengthAdjust="spacingAndGlyphs">+3.000 m</text><text x="837" y="347" font-family="Liberation Sans" font-weight="bold" font-size="3.2" fill="#202020" textLength="10" lengthAdjust="spacingAndGlyphs">+3.000 m</text><text x="837" y="362" font-family="Liberation Sans" font-weight="bold" font-size="3.2" fill="#202020" textLength="10" lengthAdjust="spacingAndGlyphs">+3.000 m</text><path d="M828 229.5 H869 a1.5 1.5 0 0 1 0 3 H828" fill="none" stroke="#40e8e8" stroke-width="0.9"/><path d="M828 245.0 H876 a1.5 1.5 0 0 1 0 3 H828" fill="none" stroke="#40e8e8" stroke-width="0.9"/><path d="M828 262.5 H883 a1.5 1.5 0 0 1 0 3 H828" fill="none" stroke="#40e8e8" stroke-width="0.9"/><rect x="863.5" y="222" width="2.2" height="60" fill="#10f0f0" stroke="none" stroke-width="1" /><rect x="864" y="222" width="1.6" height="9" fill="#4040e0" stroke="none" stroke-width="1" /><line x1="828" y1="281" x2="889" y2="281" stroke="#505050" stroke-width="0.8" /><line x1="889" y1="281" x2="889" y2="284" stroke="#505050" stroke-width="0.6" /><rect x="895.5" y="279.5" width="7" height="3" fill="none" stroke="#404040" stroke-width="0.7" /><text x="873" y="289" font-family="Liberation Sans" font-weight="bold" font-size="3.4" fill="#202020" textLength="16" lengthAdjust="spacingAndGlyphs">Wandaufbau</text><path d="M857.5 383 H902 V283" fill="none" stroke="#c8d8d0" stroke-width="0.8"/><line x1="577.5" y1="280" x2="577.5" y2="383" stroke="#404040" stroke-width="0.8" /><rect x="842.5" y="445.5" width="70" height="37" fill="#fff" stroke="#303030" stroke-width="1" /><line x1="842" y1="448.0" x2="913" y2="448.0" stroke="#505050" stroke-width="0.5" /><line x1="842" y1="450.5" x2="913" y2="450.5" stroke="#505050" stroke-width="0.5" /><line x1="842" y1="453.0" x2="913" y2="453.0" stroke="#505050" stroke-width="0.5" /><line x1="842" y1="455.5" x2="913" y2="455.5" stroke="#505050" stroke-width="0.5" /><line x1="842" y1="458.0" x2="913" y2="458.0" stroke="#505050" stroke-width="0.5" /><line x1="842" y1="460.5" x2="913" y2="460.5" stroke="#505050" stroke-width="0.5" /><line x1="842" y1="463.0" x2="913" y2="463.0" stroke="#505050" stroke-width="0.5" /><line x1="845" y1="446" x2="845" y2="463" stroke="#505050" stroke-width="0.6" /><line x1="848" y1="446" x2="848" y2="463" stroke="#505050" stroke-width="0.6" /><line x1="850.5" y1="446" x2="850.5" y2="463" stroke="#505050" stroke-width="0.6" /><line x1="892" y1="446" x2="892" y2="463" stroke="#505050" stroke-width="0.6" /><line x1="896" y1="446" x2="896" y2="463" stroke="#505050" stroke-width="0.6" /><line x1="899" y1="446" x2="899" y2="463" stroke="#505050" stroke-width="0.6" /><line x1="902" y1="446" x2="902" y2="463" stroke="#505050" stroke-width="0.6" /><line x1="905" y1="446" x2="905" y2="463" stroke="#505050" stroke-width="0.6" /><line x1="908" y1="446" x2="908" y2="463" stroke="#505050" stroke-width="0.6" /><line x1="911" y1="446" x2="911" y2="463" stroke="#505050" stroke-width="0.6" /><line x1="892" y1="463" x2="892" y2="482" stroke="#707070" stroke-width="0.5" /><line x1="896" y1="463" x2="896" y2="482" stroke="#707070" stroke-width="0.5" /><line x1="899" y1="463" x2="899" y2="482" stroke="#707070" stroke-width="0.5" /><line x1="902" y1="463" x2="902" y2="482" stroke="#707070" stroke-width="0.5" /><line x1="905" y1="463" x2="905" y2="482" stroke="#707070" stroke-width="0.5" /><line x1="908" y1="463" x2="908" y2="482" stroke="#707070" stroke-width="0.5" /><line x1="911" y1="463" x2="911" y2="482" stroke="#707070" stroke-width="0.5" /><rect x="843" y="463.5" width="26" height="1.6" fill="#202020" stroke="none" stroke-width="1" /><rect x="843" y="466.5" width="20" height="1" fill="#404040" stroke="none" stroke-width="1" /><rect x="843" y="469.5" width="16" height="1" fill="#404040" stroke="none" stroke-width="1" /><rect x="843" y="472.5" width="45" height="1.4" fill="#303030" stroke="none" stroke-width="1" /><rect x="843" y="475" width="40" height="1.2" fill="#303030" stroke="none" stroke-width="1" /><rect x="843" y="478" width="36" height="1.4" fill="#303030" stroke="none" stroke-width="1" /><rect x="843" y="480.5" width="20" height="1" fill="#404040" stroke="none" stroke-width="1" /><line x1="842" y1="471" x2="892" y2="471" stroke="#404040" stroke-width="0.5" /><line x1="842" y1="477" x2="892" y2="477" stroke="#404040" stroke-width="0.5" /><rect x="893" y="475" width="2" height="6" fill="#202020" stroke="none" stroke-width="1" /><rect x="897" y="474" width="3" height="7" fill="#202020" stroke="none" stroke-width="1" /><rect x="901" y="474" width="3" height="7" fill="#202020" stroke="none" stroke-width="1" /><rect x="905" y="475" width="2" height="6" fill="#202020" stroke="none" stroke-width="1" /><rect x="908" y="475" width="2" height="6" fill="#202020" stroke="none" stroke-width="1" /><rect x="842.5" y="485.5" width="70" height="31.5" fill="#fff" stroke="#303030" stroke-width="1" /><ellipse cx="855.5" cy="490.5" rx="10" ry="4" fill="none" stroke="#202020" stroke-width="0.9"/><rect x="849" y="489" width="13" height="3" fill="none" stroke="#303030" stroke-width="0.8" /><rect x="873" y="486.5" width="30" height="1.6" fill="#202020" stroke="none" stroke-width="1" /><rect x="873" y="489" width="28" height="1.4" fill="#303030" stroke="none" stroke-width="1" /><rect x="873" y="491.5" width="20" height="1" fill="#505050" stroke="none" stroke-width="1" /><rect x="873" y="494" width="14" height="1" fill="#505050" stroke="none" stroke-width="1" /><line x1="842" y1="497" x2="913" y2="497" stroke="#303030" stroke-width="0.8" /><rect x="850" y="498.5" width="18" height="2" fill="#202020" stroke="none" stroke-width="1" /><rect x="872" y="498.5" width="16" height="1.8" fill="#404040" stroke="none" stroke-width="1" /><rect x="893" y="498" width="17" height="0.8" fill="#404040" stroke="none" stroke-width="1" /><line x1="842" y1="502" x2="913" y2="502" stroke="#303030" stroke-width="0.8" /><rect x="843" y="504" width="68" height="1.8" fill="#202020" stroke="none" stroke-width="1" /><line x1="842" y1="507" x2="913" y2="507" stroke="#303030" stroke-width="0.6" /><rect x="856" y="508.5" width="20" height="1.6" fill="#303030" stroke="none" stroke-width="1" /><line x1="842" y1="511" x2="913" y2="511" stroke="#303030" stroke-width="0.8" /><line x1="864" y1="511" x2="864" y2="517" stroke="#303030" stroke-width="0.6" /><line x1="878" y1="511" x2="878" y2="517" stroke="#303030" stroke-width="0.6" /><line x1="894" y1="511" x2="894" y2="517" stroke="#303030" stroke-width="0.6" /><rect x="866" y="512.5" width="10" height="1.5" fill="#303030" stroke="none" stroke-width="1" /><rect x="879" y="512.5" width="12" height="1.5" fill="#303030" stroke="none" stroke-width="1" /><rect x="895" y="512.5" width="12" height="1" fill="#505050" stroke="none" stroke-width="1" /><rect x="842.5" y="519.5" width="70" height="24" fill="#fff" stroke="#303030" stroke-width="1" /><rect x="843" y="521" width="18" height="1.2" fill="#303030" stroke="none" stroke-width="1" /><rect x="843" y="523.5" width="36" height="1.4" fill="#202020" stroke="none" stroke-width="1" /><rect x="843" y="526" width="46" height="1.8" fill="#202020" stroke="none" stroke-width="1" /><text x="893" y="527.5" font-family="Liberation Sans" font-size="8" fill="#202020" textLength="17" lengthAdjust="spacingAndGlyphs">DIAP</text><line x1="842" y1="529" x2="913" y2="529" stroke="#303030" stroke-width="1.2" /><rect x="843" y="530.5" width="10" height="1" fill="#404040" stroke="none" stroke-width="1" /><rect x="856" y="531.5" width="22" height="1.6" fill="#303030" stroke="none" stroke-width="1" /><line x1="842" y1="535" x2="913" y2="535" stroke="#303030" stroke-width="1" /><line x1="852" y1="535" x2="852" y2="543" stroke="#303030" stroke-width="0.7" /><line x1="862" y1="535" x2="862" y2="543" stroke="#303030" stroke-width="0.7" /><line x1="870" y1="535" x2="870" y2="543" stroke="#303030" stroke-width="0.7" /><line x1="893" y1="535" x2="893" y2="543" stroke="#303030" stroke-width="0.7" /><rect x="844" y="538" width="6" height="1.5" fill="#303030" stroke="none" stroke-width="1" /><rect x="854" y="538" width="7" height="1.5" fill="#303030" stroke="none" stroke-width="1" /><rect x="872" y="537" width="18" height="2" fill="#303030" stroke="none" stroke-width="1" /><rect x="872" y="540" width="16" height="1.5" fill="#303030" stroke="none" stroke-width="1" /><rect x="895" y="538" width="16" height="2.5" fill="#202020" stroke="none" stroke-width="1" /></g></svg>
<div style="left:182px;top:626px;width:778px;height:14px;background:#808080"></div>
<div class="t" style="left:186px;top:630px;font-size:9px;line-height:9px;color:#c0c0c0;transform:scaleX(0.845);">Befehlszeile</div>
<svg style="left:938px;top:629px" width="8" height="8" viewBox="0 0 8 8"><path d="M2 0.5h4v4h-4zM1 4.5h6M4 4.5v3.5" stroke="#fff" fill="none"/></svg>
<svg style="left:949px;top:629px" width="8" height="8" viewBox="0 0 8 8"><path d="M1 1l6 6M7 1l-6 6" stroke="#fff" stroke-width="1.6"/></svg>
<div style="left:182px;top:640px;width:778px;height:17px;background:#d4d0c8"></div>
<div style="left:184px;top:641px;width:14px;height:15px;background:#d4d0c8;box-shadow:inset -1px -1px #808080,inset 1px 1px #fff"></div>
<svg style="left:187px;top:643px" width="9" height="10" viewBox="0 0 9 10"><path d="M1 0.5v8l2-2 2 3 1-0.5-2-3h3z" fill="#fff" stroke="#a0a0a0"/></svg>
<div style="left:198px;top:642px;width:1px;height:13px;background:#b0b0b0"></div>
<div style="left:670px;top:641px;width:290px;height:15px;background:#d4d0c8;box-shadow:inset -1px -1px #808080,inset 1px 1px #fff"></div>
<div style="left:842px;top:641px;width:13px;height:15px;background:#ecebe6;box-shadow:inset 1px 1px #808080,inset -1px -1px #fff"></div>
<div style="left:855px;top:641px;width:13px;height:15px;background:#ecebe6;box-shadow:inset 1px 1px #808080,inset -1px -1px #fff"></div>
<div style="left:934px;top:641px;width:13px;height:15px;background:#ecebe6;box-shadow:inset 1px 1px #808080,inset -1px -1px #fff"></div>
<svg style="left:673px;top:643px" width="11" height="11" viewBox="0 0 11 11"><g transform="translate(5.5 5.5) scale(0.72) translate(-5 -5)"><path d="M1 1l8 8" stroke="#909090"/><circle cx="1" cy="1" r="1" fill="#909090"/></g></svg>
<svg style="left:686px;top:643px" width="11" height="11" viewBox="0 0 11 11"><g transform="translate(5.5 5.5) scale(0.72) translate(-5 -5)"><path d="M1 1l8 8" stroke="#909090"/><circle cx="9" cy="9" r="1" fill="#909090"/></g></svg>
<svg style="left:699px;top:643px" width="11" height="11" viewBox="0 0 11 11"><g transform="translate(5.5 5.5) scale(0.72) translate(-5 -5)"><circle cx="5" cy="5" r="3.5" fill="none" stroke="#a0a0a0"/><circle cx="5" cy="5" r="1" fill="#a0a0a0"/></g></svg>
<svg style="left:712px;top:643px" width="11" height="11" viewBox="0 0 11 11"><g transform="translate(5.5 5.5) scale(0.72) translate(-5 -5)"><path d="M1 1l8 8M9 1l-8 8" stroke="#909090"/></g></svg>
<svg style="left:730px;top:643px" width="11" height="11" viewBox="0 0 11 11"><g transform="translate(5.5 5.5) scale(0.72) translate(-5 -5)"><path d="M1 8l4-6 4 6" stroke="#909090" fill="none"/></g></svg>
<svg style="left:743px;top:643px" width="11" height="11" viewBox="0 0 11 11"><g transform="translate(5.5 5.5) scale(0.72) translate(-5 -5)"><path d="M1 9l8-6" stroke="#a0a0a0"/><path d="M6 1h3v3" stroke="#a0a0a0" fill="none"/></g></svg>
<svg style="left:756px;top:643px" width="11" height="11" viewBox="0 0 11 11"><g transform="translate(5.5 5.5) scale(0.72) translate(-5 -5)"><path d="M1 1h8l-4 8z" stroke="#a0a0a0" fill="none"/></g></svg>
<svg style="left:769px;top:643px" width="11" height="11" viewBox="0 0 11 11"><g transform="translate(5.5 5.5) scale(0.72) translate(-5 -5)"><path d="M1 8l8-4" stroke="#a0a0a0"/><circle cx="9" cy="4" r="1" fill="#a0a0a0"/></g></svg>
<svg style="left:787px;top:643px" width="11" height="11" viewBox="0 0 11 11"><path d="M1 1l8 8M4 9l5-5" stroke="#2030c0" stroke-width="1.2"/><circle cx="4" cy="4" r="2" fill="#d03030"/></svg>
<svg style="left:803px;top:643px" width="11" height="11" viewBox="0 0 11 11"><path d="M1 1h8M1 4h8M1 7h8M1 1v8M4 1v8M7 1v8" stroke="#303030" stroke-dasharray="1 1.5"/></svg>
<svg style="left:817px;top:643px" width="11" height="11" viewBox="0 0 11 11"><path d="M1 2h8M5 2v7M1 9h8" stroke="#303030"/><circle cx="5" cy="5" r="1" fill="#2030c0"/></svg>
<svg style="left:830px;top:643px" width="11" height="11" viewBox="0 0 11 11"><path d="M1 1l8 8M9 1l-8 8" stroke="#303030"/><circle cx="5" cy="5" r="1.5" fill="#20d020"/></svg>
<svg style="left:844px;top:643px" width="11" height="11" viewBox="0 0 11 11"><path d="M1 1l8 8" stroke="#303030" stroke-width="1.3"/><circle cx="2" cy="2" r="1.5" fill="#d02020"/></svg>
<svg style="left:857px;top:643px" width="11" height="11" viewBox="0 0 11 11"><path d="M1 1l8 8" stroke="#303030" stroke-width="1.3"/><circle cx="8" cy="8" r="1.5" fill="#d02020"/></svg>
<svg style="left:870px;top:643px" width="11" height="11" viewBox="0 0 11 11"><path d="M1 1l8 8M9 1l-8 8" stroke="#303030"/><circle cx="5" cy="5" r="1.5" fill="#d02020"/></svg>
<svg style="left:883px;top:643px" width="11" height="11" viewBox="0 0 11 11"><path d="M1 9l4-8 4 8" stroke="#303030" fill="none"/><circle cx="5" cy="5" r="1.5" fill="#d02020"/></svg>
<svg style="left:896px;top:643px" width="11" height="11" viewBox="0 0 11 11"><path d="M1 9q0-8 8-8" stroke="#303030" fill="none"/><circle cx="3" cy="3" r="1.5" fill="#d02020"/></svg>
<svg style="left:909px;top:643px" width="11" height="11" viewBox="0 0 11 11"><rect x="1" y="1" width="8" height="8" stroke="#303030" fill="none"/><circle cx="9" cy="9" r="1.5" fill="#d02020"/></svg>
<svg style="left:922px;top:643px" width="11" height="11" viewBox="0 0 11 11"><path d="M1 9q4-8 8-8" stroke="#303030" fill="none"/><circle cx="6" cy="5" r="1.5" fill="#d02020"/></svg>
<svg style="left:936px;top:643px" width="11" height="11" viewBox="0 0 11 11"><rect x="1" y="4" width="8" height="5" fill="#d8d030" stroke="#303030"/><path d="M1 3h8" stroke="#303030"/></svg>
<svg style="left:949px;top:643px" width="11" height="11" viewBox="0 0 11 11"><rect x="2" y="1" width="6" height="8" fill="#d8d030" stroke="#303030"/><path d="M2 3h6M2 5h6" stroke="#303030"/></svg>
<div style="left:729px;top:643px;width:1px;height:11px;background:#909090"></div>
<div style="left:730px;top:643px;width:1px;height:11px;background:#fff"></div>
<div style="left:785px;top:643px;width:1px;height:11px;background:#909090"></div>
<div style="left:786px;top:643px;width:1px;height:11px;background:#fff"></div>
<div style="left:800px;top:643px;width:1px;height:11px;background:#909090"></div>
<div style="left:801px;top:643px;width:1px;height:11px;background:#fff"></div>
<div style="left:187px;top:658px;width:773px;height:15px;background:#fff;box-shadow:inset 1px 1px #404040,inset 2px 2px #808080"></div>
<div class="t" style="left:190px;top:662px;font-size:9px;line-height:9px;color:#101010;transform:scaleX(0.902);">Befehl &gt;</div>
<div style="left:182px;top:673px;width:778px;height:2px;background:#d4d0c8"></div>
<div style="left:0px;top:675px;width:960px;height:14px;background:#d4d0c8"></div>
<div style="left:1px;top:676px;width:77px;height:12px;box-shadow:inset 1px 1px #fff,inset -1px -1px #808080"></div>
<div style="left:79px;top:676px;width:77px;height:12px;box-shadow:inset 1px 1px #fff,inset -1px -1px #808080"></div>
<div style="left:157px;top:676px;width:22px;height:12px;box-shadow:inset 1px 1px #fff,inset -1px -1px #808080"></div>
<div style="left:180px;top:676px;width:41px;height:12px;box-shadow:inset 1px 1px #fff,inset -1px -1px #808080"></div>
<div class="t" style="left:163px;top:679px;font-size:9px;line-height:9px;color:#101010;transform:scaleX(1.067);">m</div>
<div style="left:181px;top:676px;width:39px;height:12px;overflow:hidden"><div class="t" style="left:5px;top:3px;font-size:9px;line-height:9px;color:#101010;transform:scaleX(0.86)">Ebene XY</div></div>
<div class="t" style="left:226px;top:679px;font-size:9px;line-height:9px;color:#101010;transform:scaleX(0.851);">Bereit</div>
<div style="left:0px;top:689px;width:960px;height:31px;background:#d4d0c8;box-shadow:inset 0 1px #fff"></div>
<div style="left:1px;top:691px;width:37px;height:28px;background:#d4d0c8;box-shadow:inset -1px -1px #404040,inset 1px 1px #fff,inset -2px -2px #808080"></div>
<svg style="left:3px;top:698px" width="12" height="12" viewBox="0 0 12 12"><path d="M1 2q2-1 5 0v4q-3-1-5 0z" fill="#f05020"/><path d="M6.5 2q2.5 1 5 0v4q-2.5 1-5 0z" fill="#60b030"/><path d="M1 6.5q2-1 5 0v4q-3-1-5 0z" fill="#3090e0"/><path d="M6.5 6.5q2.5 1 5 0v4q-2.5 1-5 0z" fill="#f0c020"/></svg>
<div class="t" style="left:15px;top:700px;font-size:10px;line-height:10px;color:#101010;font-weight:bold;transform:scaleX(0.966);">Start</div>
<div style="left:44px;top:691px;width:32px;height:28px;background:#d4d0c8;box-shadow:inset -1px -1px #404040,inset 1px 1px #fff,inset -2px -2px #808080"></div>
<svg style="left:49px;top:694px" width="22" height="22" viewBox="0 0 22 22"><path d="M1 4h7l2 2h11v14h-20z" fill="#f0d070" stroke="#c8a040" stroke-width="0.8"/><rect x="3" y="3" width="16" height="3" fill="#fff"/><circle cx="5" cy="4.5" r="0.8" fill="#40a040"/><circle cx="10" cy="4.5" r="0.8" fill="#d03030"/><circle cx="15" cy="4.5" r="0.8" fill="#3080d0"/><path d="M1 13h20v7h-20z" fill="#70b8e8"/><rect x="7" y="15" width="8" height="3" fill="#f0d070"/></svg>
<svg style="left:82px;top:693px" width="24" height="24" viewBox="0 0 24 24"><circle cx="12" cy="13" r="6.5" fill="none" stroke="#30a8e8" stroke-width="4"/><rect x="7" y="12" width="10" height="2.5" fill="#30a8e8"/><rect x="13" y="14.6" width="7" height="2.6" fill="#d4d0c8"/><ellipse cx="12" cy="12" rx="11" ry="5" transform="rotate(-35 12 12)" fill="none" stroke="#f0c020" stroke-width="1.8"/></svg>
<svg style="left:116px;top:695px" width="22" height="22" viewBox="0 0 22 22"><rect x="3" y="3" width="17" height="17" rx="2" fill="#5ab0e0" stroke="#3080c0"/><circle cx="11.5" cy="11.5" r="6" fill="#f07020"/><path d="M9.5 8.5v6l5-3z" fill="#fff"/></svg>
<svg style="left:150px;top:692px" width="26" height="26" viewBox="0 0 26 26"><circle cx="13" cy="13" r="11" fill="#fff"/><path d="M4 16q-2-4 2-6l2-6 2 5 1-7 2 7 2-6 1 7 3-5q1 4-2 9q-3 5-8 5q-5 0-5-3z" fill="#e02020"/></svg>
<svg style="left:185px;top:692px" width="26" height="26" viewBox="0 0 26 26"><path d="M8 3l6 3v7l-6 3-6-3v-7z" fill="#f0c020" stroke="#a08010"/><path d="M18 10l6 3v7l-6 3-6-3v-7z" fill="#f0c020" stroke="#a08010"/><path d="M4 4l9 9M13 4l-9 9" stroke="#202020" stroke-width="1.5"/><path d="M15 16h6v4l-3 2-3-2z" fill="#3060d0"/><path d="M18 16v6" stroke="#f0d040"/></svg>
<svg style="left:220px;top:693px" width="24" height="24" viewBox="0 0 24 24"><circle cx="12" cy="12" r="10.5" fill="#db4437"/><path d="M12 12L3 7A10.5 10.5 0 0 0 8 21.5z" fill="#0f9d58"/><path d="M12 12L21.5 8A10.5 10.5 0 0 1 9 22z" fill="#ffcd40"/><path d="M12 12L3 7A10.5 10.5 0 0 1 21.5 8z" fill="#db4437"/><circle cx="12" cy="12" r="4.8" fill="#fff"/><circle cx="12" cy="12" r="3.8" fill="#4285f4"/></svg>
<div style="left:252px;top:691px;width:34px;height:28px;background:#d4d0c8;box-shadow:inset -1px -1px #404040,inset 1px 1px #fff,inset -2px -2px #808080"></div>
<svg style="left:257px;top:694px" width="24" height="24" viewBox="0 0 24 24"><path d="M2 5h6l5 5-5 5h-6l5-5z" fill="#f0c020"/><path d="M22 11h-6l-5 5 5 5h6l-5-5z" fill="#e8b010"/></svg>
<div style="left:287px;top:691px;width:34px;height:28px;background:#d4d0c8;box-shadow:inset -1px -1px #404040,inset 1px 1px #fff,inset -2px -2px #808080"></div>
<svg style="left:291px;top:693px" width="26" height="26" viewBox="0 0 26 26"><path d="M3 13q0-9 10-9q10 0 10 8q0 3-4 3q-3 0-2 3q1 4-4 4q-10 0-10-9z" fill="#e0e8f0" stroke="#7890a0"/><circle cx="8" cy="11" r="1.6" fill="#e02020"/><circle cx="11" cy="8" r="1.6" fill="#30a030"/><circle cx="15" cy="8" r="1.6" fill="#f0c020"/><circle cx="8" cy="16" r="1.6" fill="#2080e0"/><path d="M24 2L12 20" stroke="#d08030" stroke-width="2"/></svg>
<div style="left:322px;top:691px;width:34px;height:28px;background:#fafaf8;box-shadow:inset 1px 1px #404040,inset -1px -1px #fff,inset 2px 2px #808080"></div>
<svg style="left:325px;top:693px" width="28" height="26" viewBox="0 0 28 26"><path d="M3 4l4-2v8z" fill="#f0d020"/><path d="M7 3l4-1v9l-4-1z" fill="#40c040"/><path d="M11 3l4 0v9l-4-1z" fill="#30a0f0"/><path d="M15 3l5 1v5l-5-0z" fill="#3070e0"/><path d="M20 4l4 1v5l-4 0z" fill="#d02020"/><path d="M11 9l8 1-2 2v11l-4 1z" fill="#c02020"/><path d="M8 7l3 0v14l-3-1z" fill="#e04040"/></svg>
</body></html>
